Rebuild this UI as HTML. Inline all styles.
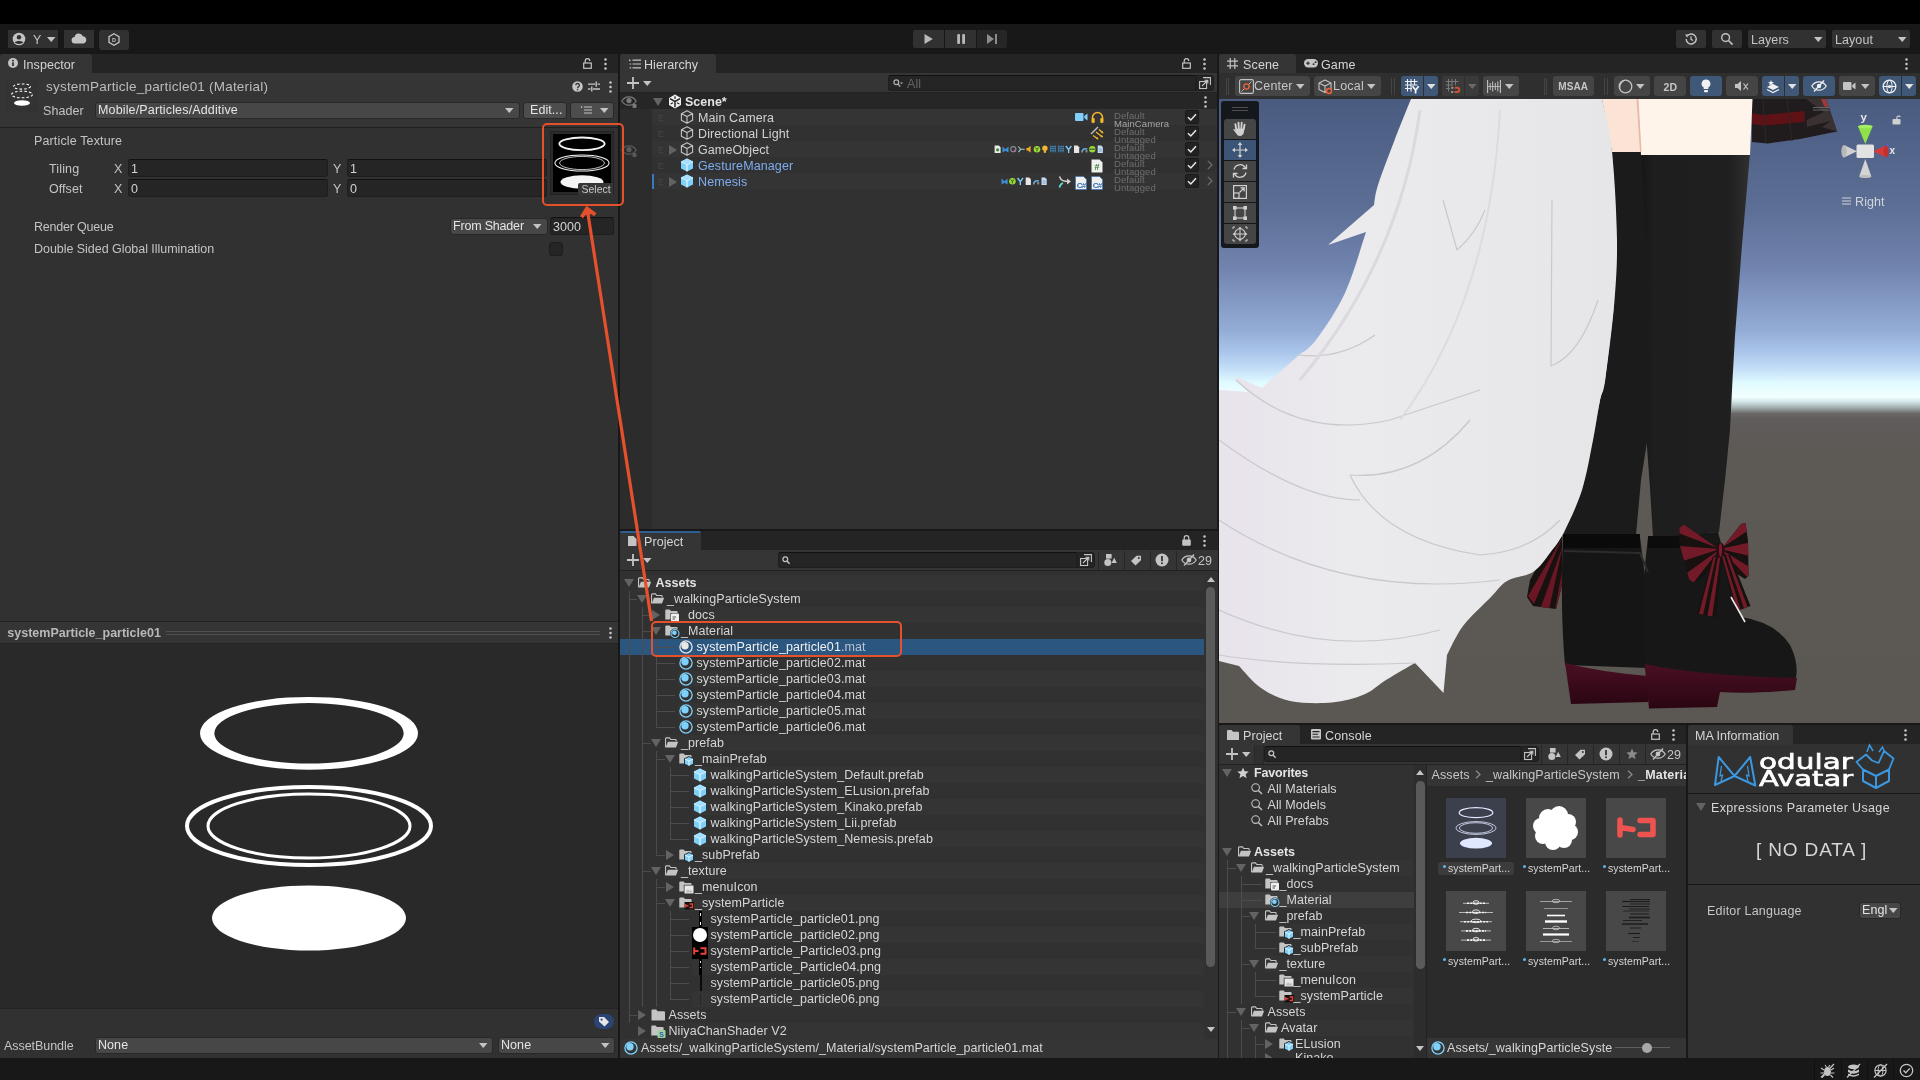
<!DOCTYPE html>
<html><head><meta charset="utf-8"><title>Unity</title>
<style>
html,body{margin:0;padding:0;background:#191919;}
body{width:1920px;height:1080px;position:relative;overflow:hidden;font-family:'Liberation Sans',sans-serif;font-size:12.5px;color:#d2d2d2;}
div,span.t,svg{position:absolute;box-sizing:border-box;}
span.t{white-space:pre;display:block;}
svg{overflow:visible;}
</style></head><body><div id="root" style="left:0;top:0;width:1920px;height:1080px;will-change:transform;"><!-- p_top --><div style="left:0px;top:0px;width:1920px;height:24px;background:#000;"></div><div style="left:0px;top:24px;width:1920px;height:1056px;background:#181818;"></div><div style="left:8px;top:30px;width:50px;height:18px;background:#313131;"></div><svg style="left:12px;top:32px;" width="14" height="14" viewBox="0 0 14 14"><circle cx="7" cy="7" r="6.3" fill="#c4c4c4"/><circle cx="7" cy="5.2" r="2.2" fill="#313131"/><path d="M2.8 10.6C3.8 8.6 10.2 8.6 11.2 10.6C10 12.3 4 12.3 2.8 10.6Z" fill="#313131"/></svg><span class="t" style="left:33px;top:31.5px;height:16px;line-height:16px;color:#c4c4c4;font-size:12.5px;letter-spacing:0.07px;">Y</span><svg style="left:46.75px;top:37.0px;" width="8.5" height="5" viewBox="0 0 8.5 5"><path d="M0 0H8.5L4.25 5Z" fill="#c4c4c4"/></svg><div style="left:64px;top:30px;width:30px;height:18px;background:#313131;"></div><svg style="left:71px;top:33px;" width="16" height="11" viewBox="0 0 16 11"><path d="M4 10.5a3.2 3.2 0 0 1 -.4 -6.4A4.3 4.3 0 0 1 11.8 3.2A3.7 3.7 0 0 1 12.4 10.5Z" fill="#c4c4c4"/></svg><div style="left:99px;top:30px;width:30px;height:19.5px;background:#313131;border-radius:3px;"></div><svg style="left:108px;top:33px;" width="12" height="13" viewBox="0 0 12 13"><path d="M6 .8L11 3.7V9.3L6 12.2L1 9.3V3.7Z" fill="none" stroke="#c4c4c4" stroke-width="1.3"/><text x="6" y="8.6" font-size="5.5" font-weight="700" text-anchor="middle" fill="#c4c4c4" font-family="Liberation Sans,sans-serif">D</text></svg><div style="left:913px;top:30px;width:31px;height:18px;background:#313131;border-radius:2px 0 0 2px;"></div><div style="left:945px;top:30px;width:31px;height:18px;background:#313131;"></div><div style="left:977px;top:30px;width:30px;height:18px;background:#262626;border-radius:0 2px 2px 0;"></div><svg style="left:923px;top:34px;" width="10" height="10" viewBox="0 0 10 10"><path d="M1.5 0V10L9.8 5Z" fill="#b8b8b8"/></svg><svg style="left:956px;top:34px;" width="10" height="10" viewBox="0 0 10 10"><rect x="1.2" y="0" width="2.8" height="10" rx="1" fill="#b8b8b8"/><rect x="6.2" y="0" width="2.8" height="10" rx="1" fill="#b8b8b8"/></svg><svg style="left:986px;top:34px;" width="12" height="10" viewBox="0 0 12 10"><path d="M1 0V10L8 5Z" fill="#8c8c8c"/><rect x="9" y="0" width="2" height="10" fill="#8c8c8c"/></svg><div style="left:1676px;top:30px;width:30px;height:18px;background:#313131;border-radius:2px;"></div><svg style="left:1684px;top:32px;" width="14" height="14" viewBox="0 0 14 14"><path d="M2.2 7a5 5 0 1 0 1.5 -3.6" fill="none" stroke="#c4c4c4" stroke-width="1.4"/><path d="M1.2 2.2L4.6 2.8L3 5.8Z" fill="#c4c4c4"/><path d="M7 4.2V7.3L9 8.6" fill="none" stroke="#c4c4c4" stroke-width="1.2"/></svg><div style="left:1712px;top:30px;width:30px;height:18px;background:#313131;border-radius:2px;"></div><svg style="left:1720px;top:32px;" width="14" height="14" viewBox="0 0 14 14"><circle cx="5.6" cy="5.6" r="3.9" fill="none" stroke="#c4c4c4" stroke-width="1.4"/><path d="M8.5 8.5L12.6 12.6" stroke="#c4c4c4" stroke-width="1.6"/></svg><div style="left:1748px;top:30px;width:78px;height:18px;background:#313131;border-radius:2px;"></div><span class="t" style="left:1751px;top:31.5px;height:16px;line-height:16px;color:#c4c4c4;font-size:12.5px;letter-spacing:0.07px;">Layers</span><svg style="left:1814.25px;top:37.0px;" width="8.5" height="5" viewBox="0 0 8.5 5"><path d="M0 0H8.5L4.25 5Z" fill="#c4c4c4"/></svg><div style="left:1832px;top:30px;width:78px;height:18px;background:#313131;border-radius:2px;"></div><span class="t" style="left:1835px;top:31.5px;height:16px;line-height:16px;color:#c4c4c4;font-size:12.5px;letter-spacing:0.07px;">Layout</span><svg style="left:1898.25px;top:37.0px;" width="8.5" height="5" viewBox="0 0 8.5 5"><path d="M0 0H8.5L4.25 5Z" fill="#c4c4c4"/></svg><!-- p_inspector --><div style="left:0px;top:54px;width:618px;height:1004px;background:#313131;"></div><div style="left:0px;top:54px;width:618px;height:19px;background:#242424;"></div><div style="left:0px;top:54px;width:92px;height:20px;background:#353535;border-radius:3px 3px 0 0;"></div><svg style="left:8px;top:58px;" width="10" height="10" viewBox="0 0 10 10"><circle cx="5" cy="5" r="5" fill="#c4c4c4"/><rect x="4.2" y="4.2" width="1.6" height="3.8" fill="#242424"/><circle cx="5" cy="2.6" r="0.95" fill="#242424"/></svg><span class="t" style="left:23px;top:56.5px;height:16px;line-height:16px;color:#d2d2d2;font-size:12.5px;letter-spacing:0.07px;">Inspector</span><svg style="left:583px;top:58px;" width="9" height="11" viewBox="0 0 9 11"><rect x="0.7" y="5" width="7.6" height="5.3" fill="none" stroke="#c4c4c4" stroke-width="1.2"/><path d="M2.2 5V3a2.3 2.3 0 0 1 4.6 0" fill="none" stroke="#c4c4c4" stroke-width="1.2"/></svg><svg style="left:603.5px;top:57.5px;" width="3" height="12" viewBox="0 0 3 12"><circle cx="1.5" cy="1.5" r="1.3" fill="#c4c4c4"/><circle cx="1.5" cy="6" r="1.3" fill="#c4c4c4"/><circle cx="1.5" cy="10.5" r="1.3" fill="#c4c4c4"/></svg><div style="left:0px;top:73px;width:618px;height:54px;background:#353535;"></div><div style="left:0px;top:127px;width:618px;height:1px;background:#1f1f1f;"></div><div style="left:6px;top:80px;width:32px;height:32px;background:#333333;"></div><svg style="left:6px;top:80px;" width="32" height="32" viewBox="0 0 32 32"><ellipse cx="16" cy="6.5" rx="8.5" ry="2.6" fill="none" stroke="#fff" stroke-width="1.05" stroke-dasharray="2.6 2"/><ellipse cx="16" cy="14.5" rx="10.5" ry="3.3" fill="none" stroke="#fff" stroke-width="1.05" stroke-dasharray="2.6 2"/><ellipse cx="16" cy="23" rx="8" ry="2.8" fill="#fff"/></svg><span class="t" style="left:46px;top:78.5px;height:16px;line-height:16px;color:#bcbcbc;font-size:13.5px;letter-spacing:0.21px;">systemParticle_particle01 (Material)</span><svg style="left:572px;top:81px;" width="11" height="11" viewBox="0 0 11 11"><circle cx="5.5" cy="5.5" r="5.3" fill="#c4c4c4"/><path d="M3.8 4.3a1.8 1.8 0 1 1 2.6 1.6c-.6.4-.8.7-.8 1.3" fill="none" stroke="#353535" stroke-width="1.3"/><circle cx="5.55" cy="8.7" r=".8" fill="#353535"/></svg><svg style="left:588px;top:81px;" width="12" height="11" viewBox="0 0 12 11"><path d="M0 3.2H7M9.5 3.2H12M0 8H2.5M5 8H12" stroke="#c4c4c4" stroke-width="1.3"/><path d="M8.2 0.6V5.8M3.8 5.4V10.6" stroke="#c4c4c4" stroke-width="1.4"/></svg><svg style="left:608.5px;top:80.5px;" width="3" height="12" viewBox="0 0 3 12"><circle cx="1.5" cy="1.5" r="1.3" fill="#c4c4c4"/><circle cx="1.5" cy="6" r="1.3" fill="#c4c4c4"/><circle cx="1.5" cy="10.5" r="1.3" fill="#c4c4c4"/></svg><span class="t" style="left:43px;top:102.5px;height:16px;line-height:16px;color:#c4c4c4;font-size:12.5px;letter-spacing:0.07px;">Shader</span><div style="left:94.5px;top:101.5px;width:425px;height:17px;background:#474747;border:1px solid #282828;border-radius:3px;"></div><span class="t" style="left:98px;top:101.5px;height:16px;line-height:16px;color:#e4e4e4;font-size:12.5px;letter-spacing:0.15px;">Mobile/Particles/Additive</span><svg style="left:505.25px;top:107.5px;" width="8.5" height="5" viewBox="0 0 8.5 5"><path d="M0 0H8.5L4.25 5Z" fill="#c4c4c4"/></svg><div style="left:523px;top:101.5px;width:43.5px;height:17px;background:#4d4d4d;border:1px solid #282828;border-radius:3px;"></div><span class="t" style="left:530px;top:101.5px;height:16px;line-height:16px;color:#e4e4e4;font-size:12.5px;letter-spacing:0.07px;">Edit...</span><div style="left:570px;top:101.5px;width:43.5px;height:17px;background:#4d4d4d;border:1px solid #282828;border-radius:3px;"></div><svg style="left:581px;top:106px;" width="11" height="8" viewBox="0 0 11 8"><path d="M3 1H11M3 4H11M3 7H11" stroke="#c4c4c4" stroke-width="1.1"/><path d="M0 0L2 1L0 2Z" fill="#c4c4c4"/></svg><svg style="left:599.75px;top:107.5px;" width="8.5" height="5" viewBox="0 0 8.5 5"><path d="M0 0H8.5L4.25 5Z" fill="#c4c4c4"/></svg><span class="t" style="left:34px;top:132.5px;height:16px;line-height:16px;color:#c4c4c4;font-size:12.5px;letter-spacing:0.14px;">Particle Texture</span><span class="t" style="left:49px;top:160.5px;height:16px;line-height:16px;color:#c4c4c4;font-size:12.5px;letter-spacing:0.15px;">Tiling</span><span class="t" style="left:49px;top:180.5px;height:16px;line-height:16px;color:#c4c4c4;font-size:12.5px;letter-spacing:0.06px;">Offset</span><span class="t" style="left:114px;top:160.5px;height:16px;line-height:16px;color:#c4c4c4;font-size:12.5px;letter-spacing:0.07px;">X</span><span class="t" style="left:114px;top:180.5px;height:16px;line-height:16px;color:#c4c4c4;font-size:12.5px;letter-spacing:0.07px;">X</span><span class="t" style="left:333px;top:160.5px;height:16px;line-height:16px;color:#c4c4c4;font-size:12.5px;letter-spacing:0.07px;">Y</span><span class="t" style="left:333px;top:180.5px;height:16px;line-height:16px;color:#c4c4c4;font-size:12.5px;letter-spacing:0.07px;">Y</span><div style="left:128px;top:159px;width:200px;height:18px;background:#252525;border:1px solid #1e1e1e;border-top-color:#111;border-radius:3px;"></div><span class="t" style="left:131px;top:160.5px;height:16px;line-height:16px;color:#d2d2d2;font-size:12.5px;letter-spacing:0.07px;">1</span><div style="left:128px;top:179px;width:200px;height:18px;background:#252525;border:1px solid #1e1e1e;border-top-color:#111;border-radius:3px;"></div><span class="t" style="left:131px;top:180.5px;height:16px;line-height:16px;color:#d2d2d2;font-size:12.5px;letter-spacing:0.07px;">0</span><div style="left:347px;top:159px;width:200px;height:18px;background:#252525;border:1px solid #1e1e1e;border-top-color:#111;border-radius:3px;"></div><span class="t" style="left:350px;top:160.5px;height:16px;line-height:16px;color:#d2d2d2;font-size:12.5px;letter-spacing:0.07px;">1</span><div style="left:347px;top:179px;width:200px;height:18px;background:#252525;border:1px solid #1e1e1e;border-top-color:#111;border-radius:3px;"></div><span class="t" style="left:350px;top:180.5px;height:16px;line-height:16px;color:#d2d2d2;font-size:12.5px;letter-spacing:0.07px;">0</span><div style="left:550px;top:131px;width:64px;height:64px;background:#2a2a2a;border:1px solid #232323;"></div><div style="left:553px;top:134px;width:58px;height:58px;background:#000;"></div><svg style="left:553px;top:134px;" width="58" height="58" viewBox="0 0 58 58"><ellipse cx="29" cy="9.842000000000002" rx="22.644000000000002" ry="6.2829999999999995" fill="none" stroke="#f4f4f4" stroke-width="1.8746"/><ellipse cx="29" cy="29" rx="27.084" ry="8.033999999999999" fill="none" stroke="#f4f4f4" stroke-width="1.0712"/><ellipse cx="29" cy="29" rx="22.422" ry="6.592" fill="none" stroke="#f4f4f4" stroke-width="0.8034"/><ellipse cx="29" cy="47.952" rx="21.534" ry="6.694999999999999" fill="#f4f4f4"/></svg><div style="left:578px;top:182.5px;width:35px;height:12px;background:#363636;border-radius:2px 0 0 0;"></div><span class="t" style="left:581.5px;top:182.5px;height:12px;line-height:12px;color:#c8c8c8;font-size:10.5px;">Select</span><span class="t" style="left:34px;top:218.5px;height:16px;line-height:16px;color:#c4c4c4;font-size:12.5px;letter-spacing:-0.2px;">Render Queue</span><div style="left:449.5px;top:217.5px;width:98px;height:17px;background:#474747;border:1px solid #282828;border-radius:3px;"></div><span class="t" style="left:453px;top:217.5px;height:16px;line-height:16px;color:#e4e4e4;font-size:12.5px;letter-spacing:-0.19px;">From Shader</span><svg style="left:533.25px;top:223.5px;" width="8.5" height="5" viewBox="0 0 8.5 5"><path d="M0 0H8.5L4.25 5Z" fill="#c4c4c4"/></svg><div style="left:550px;top:217px;width:64px;height:18px;background:#252525;border:1px solid #1e1e1e;border-top-color:#111;border-radius:3px;"></div><span class="t" style="left:553px;top:218.5px;height:16px;line-height:16px;color:#d2d2d2;font-size:12.5px;letter-spacing:0.07px;">3000</span><span class="t" style="left:34px;top:240.5px;height:16px;line-height:16px;color:#c4c4c4;font-size:12.5px;letter-spacing:-0.04px;">Double Sided Global Illumination</span><div style="left:549px;top:242px;width:14px;height:14px;background:#252525;border:1px solid #1e1e1e;border-radius:3px;"></div><div style="left:0px;top:621px;width:618px;height:1px;background:#232323;"></div><div style="left:0px;top:622px;width:618px;height:21px;background:#353535;"></div><div style="left:0px;top:643px;width:618px;height:1px;background:#232323;"></div><span class="t" style="left:7.3px;top:624.5px;height:16px;line-height:16px;color:#b8b8b8;font-size:12.5px;font-weight:700;">systemParticle_particle01</span><div style="left:166px;top:631px;width:434px;height:1px;background:#505050;"></div><div style="left:166px;top:634px;width:434px;height:1px;background:#505050;"></div><svg style="left:608.5px;top:626.5px;" width="3" height="12" viewBox="0 0 3 12"><circle cx="1.5" cy="1.5" r="1.3" fill="#c4c4c4"/><circle cx="1.5" cy="6" r="1.3" fill="#c4c4c4"/><circle cx="1.5" cy="10.5" r="1.3" fill="#c4c4c4"/></svg><div style="left:0px;top:644px;width:618px;height:364px;background:#292929;"></div><svg style="left:0px;top:644px;" width="618" height="364" viewBox="0 0 618 364"><path fill-rule="evenodd" fill="#fff" d="M200.0 89.3a109.0 36.4 0 1 0 218.0 0a109.0 36.4 0 1 0 -218.0 0ZM214.3 89.3a94.7 30.2 0 1 0 189.4 0a94.7 30.2 0 1 0 -189.4 0Z"/><ellipse cx="309" cy="182" rx="122.0" ry="39.0" fill="none" stroke="#fff" stroke-width="4.0"/><ellipse cx="309" cy="182" rx="101.0" ry="32.0" fill="none" stroke="#fff" stroke-width="3.0"/><ellipse cx="309" cy="274.0" rx="97.0" ry="32.5" fill="#fff"/></svg><div style="left:0px;top:1008px;width:618px;height:1px;background:#232323;"></div><div style="left:594px;top:1014px;width:20px;height:15px;background:#2a4473;border-radius:8px;"></div><svg style="left:598px;top:1016px;" width="12" height="11" viewBox="0 0 12 11"><path d="M1 1H6L11 6L6.5 10.5L1 5.5Z" fill="#e8e8e8"/><circle cx="3.6" cy="3.6" r="1.1" fill="#2a4473"/></svg><span class="t" style="left:4px;top:1037.5px;height:16px;line-height:16px;color:#c4c4c4;font-size:12.5px;letter-spacing:-0.06px;">AssetBundle</span><div style="left:95px;top:1036.7px;width:397.5px;height:17px;background:#474747;border:1px solid #282828;border-radius:3px;"></div><span class="t" style="left:98px;top:1036.5px;height:16px;line-height:16px;color:#e4e4e4;font-size:12.5px;letter-spacing:0.07px;">None</span><svg style="left:478.75px;top:1042.5px;" width="8.5" height="5" viewBox="0 0 8.5 5"><path d="M0 0H8.5L4.25 5Z" fill="#c4c4c4"/></svg><div style="left:498px;top:1036.7px;width:116.5px;height:17px;background:#474747;border:1px solid #282828;border-radius:3px;"></div><span class="t" style="left:501px;top:1036.5px;height:16px;line-height:16px;color:#e4e4e4;font-size:12.5px;letter-spacing:0.07px;">None</span><svg style="left:600.75px;top:1042.5px;" width="8.5" height="5" viewBox="0 0 8.5 5"><path d="M0 0H8.5L4.25 5Z" fill="#c4c4c4"/></svg><!-- p_hierarchy --><div style="left:620px;top:54px;width:597px;height:475px;background:#313131;"></div><div style="left:620px;top:54px;width:597px;height:19px;background:#242424;"></div><div style="left:620px;top:54px;width:96px;height:20px;background:#353535;border-radius:3px 3px 0 0;"></div><svg style="left:629px;top:59px;" width="12" height="10" viewBox="0 0 12 10"><path d="M3.5 1.2H12M3.5 5H12M3.5 8.8H12" stroke="#c4c4c4" stroke-width="1.2"/><path d="M0 .2L2.2 1.2L0 2.2Z" fill="#c4c4c4"/><path d="M.6 4.4H2.2V5.6H.6ZM.6 8.2H2.2V9.4H.6Z" fill="#c4c4c4"/></svg><span class="t" style="left:644px;top:56.5px;height:16px;line-height:16px;color:#d6d6d6;font-size:12.5px;letter-spacing:0.07px;">Hierarchy</span><svg style="left:1182px;top:58px;" width="9" height="11" viewBox="0 0 9 11"><rect x="0.7" y="5" width="7.6" height="5.3" fill="none" stroke="#c4c4c4" stroke-width="1.2"/><path d="M2.2 5V3a2.3 2.3 0 0 1 4.6 0" fill="none" stroke="#c4c4c4" stroke-width="1.2"/></svg><svg style="left:1202.5px;top:57.5px;" width="3" height="12" viewBox="0 0 3 12"><circle cx="1.5" cy="1.5" r="1.3" fill="#c4c4c4"/><circle cx="1.5" cy="6" r="1.3" fill="#c4c4c4"/><circle cx="1.5" cy="10.5" r="1.3" fill="#c4c4c4"/></svg><div style="left:620px;top:73px;width:597px;height:20px;background:#353535;"></div><div style="left:620px;top:92px;width:597px;height:1px;background:#222;"></div><svg style="left:627px;top:77px;" width="12" height="12" viewBox="0 0 12 12"><path d="M6 0V12M0 6H12" stroke="#c4c4c4" stroke-width="1.8"/></svg><svg style="left:642.75px;top:80.5px;" width="8.5" height="5" viewBox="0 0 8.5 5"><path d="M0 0H8.5L4.25 5Z" fill="#c4c4c4"/></svg><div style="left:888px;top:75px;width:308px;height:16px;background:#252525;border:1px solid #1e1e1e;border-top-color:#111;border-radius:3px 0 0 3px;"></div><svg style="left:893px;top:79px;" width="10" height="9" viewBox="0 0 10 9"><circle cx="3.3" cy="3.3" r="2.4" fill="none" stroke="#b0b0b0" stroke-width="1.2"/><path d="M5 5L7.2 7.6" stroke="#b0b0b0" stroke-width="1.3"/><path d="M7 3.5H10L8.5 5.2Z" fill="#b0b0b0"/></svg><span class="t" style="left:907px;top:75.5px;height:16px;line-height:16px;color:#636363;font-size:12.5px;letter-spacing:0.07px;">All</span><div style="left:1196px;top:75px;width:18px;height:16px;background:#252525;border:1px solid #1e1e1e;border-radius:0 3px 3px 0;"></div><svg style="left:1199px;top:77px;" width="12" height="12" viewBox="0 0 12 12"><rect x=".6" y="4.5" width="7" height="7" fill="none" stroke="#c4c4c4" stroke-width="1.1"/><path d="M4 .6H11.4V8" fill="none" stroke="#c4c4c4" stroke-width="1.1"/><path d="M3 9L8.5 3.5M5.5 3.2H8.8V6.5" fill="none" stroke="#c4c4c4" stroke-width="1.1"/></svg><div style="left:620px;top:93px;width:597px;height:16px;background:#262626;"></div><div style="left:620px;top:109px;width:32px;height:420px;background:#2c2c2c;"></div><svg style="left:621px;top:96px;" width="16" height="12" viewBox="0 0 16 12"><path d="M.8 5C3 1.5 6 .8 8 .8S13 1.5 15.2 5C13 8.5 10 9.2 8 9.2S3 8.5 .8 5Z" fill="none" stroke="#7a7a7a" stroke-width="1.2"/><circle cx="8" cy="4.6" r="2.6" fill="#7a7a7a"/><rect x="11.5" y="8" width="4" height="4" rx="1" fill="#7a7a7a"/></svg><svg style="left:621px;top:145px;" width="16" height="12" viewBox="0 0 16 12"><path d="M.8 5C3 1.5 6 .8 8 .8S13 1.5 15.2 5C13 8.5 10 9.2 8 9.2S3 8.5 .8 5Z" fill="none" stroke="#5a5a5a" stroke-width="1.2"/><circle cx="8" cy="4.6" r="2.6" fill="#5a5a5a"/><rect x="11.5" y="8" width="4" height="4" rx="1" fill="#5a5a5a"/></svg><svg style="left:653px;top:97.5px;" width="10" height="8" viewBox="0 0 10 8"><path d="M0 0H10L5 8Z" fill="#636363"/></svg><svg style="left:668px;top:94px;" width="14" height="15" viewBox="0 0 14 15"><path d="M7 .5L13 4V11L7 14.5L1 11V4Z" fill="#f0f0f0"/><path d="M7 7.5V13.2M7 7.5L2 4.7M7 7.5L12 4.7" stroke="#262626" stroke-width="1.5"/><path d="M7 2.2V5M2.6 10L5 8.7M11.4 10L9 8.7" stroke="#262626" stroke-width="1.2"/></svg><span class="t" style="left:685px;top:93.5px;height:16px;line-height:16px;color:#e4e4e4;font-size:12.5px;font-weight:700;">Scene*</span><svg style="left:1203.5px;top:95.5px;" width="3" height="12" viewBox="0 0 3 12"><circle cx="1.5" cy="1.5" r="1.3" fill="#c4c4c4"/><circle cx="1.5" cy="6" r="1.3" fill="#c4c4c4"/><circle cx="1.5" cy="10.5" r="1.3" fill="#c4c4c4"/></svg><div style="left:652px;top:109px;width:565px;height:16px;background:#343434;"></div><div style="left:652px;top:141px;width:565px;height:16px;background:#343434;"></div><div style="left:652px;top:173px;width:565px;height:16px;background:#343434;"></div><span class="t" style="left:658px;top:111.5px;height:12px;line-height:12px;color:#454545;font-size:9px;letter-spacing:0.07px;">E</span><svg style="left:680px;top:110px;" width="14" height="14" viewBox="0 0 14 14"><path d="M7 .8L12.6 3.7V10.3L7 13.2L1.4 10.3V3.7Z M1.4 3.7L7 6.6L12.6 3.7M7 6.6V13.2" fill="none" stroke="#c4c4c4" stroke-width="1.1" stroke-linejoin="round"/></svg><span class="t" style="left:698px;top:109.5px;height:16px;line-height:16px;color:#d2d2d2;font-size:12.5px;letter-spacing:0.1px;">Main Camera</span><span class="t" style="left:1114px;top:110.5px;height:9px;line-height:9px;color:#6e6e6e;font-size:9.5px;letter-spacing:0.07px;">Default</span><span class="t" style="left:1114px;top:118.5px;height:9px;line-height:9px;color:#a8a8a8;font-size:9.5px;letter-spacing:0.07px;">MainCamera</span><div style="left:1185px;top:110px;width:14px;height:14px;background:#222;border-radius:2px;border:1px solid #1b1b1b;"></div><svg style="left:1187px;top:113px;" width="10" height="8" viewBox="0 0 10 8"><path d="M1 4.2L3.8 7L9 1.2" fill="none" stroke="#e8e8e8" stroke-width="1.5"/></svg><span class="t" style="left:658px;top:127.5px;height:12px;line-height:12px;color:#454545;font-size:9px;letter-spacing:0.07px;">E</span><svg style="left:680px;top:126px;" width="14" height="14" viewBox="0 0 14 14"><path d="M7 .8L12.6 3.7V10.3L7 13.2L1.4 10.3V3.7Z M1.4 3.7L7 6.6L12.6 3.7M7 6.6V13.2" fill="none" stroke="#c4c4c4" stroke-width="1.1" stroke-linejoin="round"/></svg><span class="t" style="left:698px;top:125.5px;height:16px;line-height:16px;color:#d2d2d2;font-size:12.5px;letter-spacing:0.1px;">Directional Light</span><span class="t" style="left:1114px;top:126.5px;height:9px;line-height:9px;color:#6e6e6e;font-size:9.5px;letter-spacing:0.07px;">Default</span><span class="t" style="left:1114px;top:134.5px;height:9px;line-height:9px;color:#6e6e6e;font-size:9.5px;letter-spacing:0.07px;">Untagged</span><div style="left:1185px;top:126px;width:14px;height:14px;background:#222;border-radius:2px;border:1px solid #1b1b1b;"></div><svg style="left:1187px;top:129px;" width="10" height="8" viewBox="0 0 10 8"><path d="M1 4.2L3.8 7L9 1.2" fill="none" stroke="#e8e8e8" stroke-width="1.5"/></svg><span class="t" style="left:658px;top:143.5px;height:12px;line-height:12px;color:#454545;font-size:9px;letter-spacing:0.07px;">E</span><svg style="left:669px;top:144.5px;" width="8" height="10" viewBox="0 0 8 10"><path d="M0 0V10L8 5Z" fill="#636363"/></svg><svg style="left:680px;top:142px;" width="14" height="14" viewBox="0 0 14 14"><path d="M7 .8L12.6 3.7V10.3L7 13.2L1.4 10.3V3.7Z M1.4 3.7L7 6.6L12.6 3.7M7 6.6V13.2" fill="none" stroke="#c4c4c4" stroke-width="1.1" stroke-linejoin="round"/></svg><span class="t" style="left:698px;top:141.5px;height:16px;line-height:16px;color:#d2d2d2;font-size:12.5px;letter-spacing:0.1px;">GameObject</span><span class="t" style="left:1114px;top:142.5px;height:9px;line-height:9px;color:#6e6e6e;font-size:9.5px;letter-spacing:0.07px;">Default</span><span class="t" style="left:1114px;top:150.5px;height:9px;line-height:9px;color:#6e6e6e;font-size:9.5px;letter-spacing:0.07px;">Untagged</span><div style="left:1185px;top:142px;width:14px;height:14px;background:#222;border-radius:2px;border:1px solid #1b1b1b;"></div><svg style="left:1187px;top:145px;" width="10" height="8" viewBox="0 0 10 8"><path d="M1 4.2L3.8 7L9 1.2" fill="none" stroke="#e8e8e8" stroke-width="1.5"/></svg><span class="t" style="left:658px;top:159.5px;height:12px;line-height:12px;color:#454545;font-size:9px;letter-spacing:0.07px;">E</span><svg style="left:680px;top:158px;" width="14" height="14" viewBox="0 0 14 14"><path d="M7 .5L13 3.6V10.4L7 13.5L1 10.4V3.6Z" fill="#7fd0fb"/><path d="M1 3.6L7 6.7L13 3.6M7 6.7V13.5" fill="none" stroke="#fff" stroke-width="1"/><path d="M7 .5L13 3.6L7 6.7L1 3.6Z" fill="#a6e0ff"/></svg><span class="t" style="left:698px;top:157.5px;height:16px;line-height:16px;color:#7eadf0;font-size:12.5px;letter-spacing:0.1px;">GestureManager</span><span class="t" style="left:1114px;top:158.5px;height:9px;line-height:9px;color:#6e6e6e;font-size:9.5px;letter-spacing:0.07px;">Default</span><span class="t" style="left:1114px;top:166.5px;height:9px;line-height:9px;color:#6e6e6e;font-size:9.5px;letter-spacing:0.07px;">Untagged</span><div style="left:1185px;top:158px;width:14px;height:14px;background:#222;border-radius:2px;border:1px solid #1b1b1b;"></div><svg style="left:1187px;top:161px;" width="10" height="8" viewBox="0 0 10 8"><path d="M1 4.2L3.8 7L9 1.2" fill="none" stroke="#e8e8e8" stroke-width="1.5"/></svg><svg style="left:1207px;top:160px;" width="6" height="10" viewBox="0 0 6 10"><path d="M.8 .8L5 5L.8 9.2" fill="none" stroke="#707070" stroke-width="1.2"/></svg><span class="t" style="left:658px;top:175.5px;height:12px;line-height:12px;color:#454545;font-size:9px;letter-spacing:0.07px;">E</span><svg style="left:669px;top:176.5px;" width="8" height="10" viewBox="0 0 8 10"><path d="M0 0V10L8 5Z" fill="#636363"/></svg><svg style="left:680px;top:174px;" width="14" height="14" viewBox="0 0 14 14"><path d="M7 .5L13 3.6V10.4L7 13.5L1 10.4V3.6Z" fill="#7fd0fb"/><path d="M1 3.6L7 6.7L13 3.6M7 6.7V13.5" fill="none" stroke="#fff" stroke-width="1"/><path d="M7 .5L13 3.6L7 6.7L1 3.6Z" fill="#a6e0ff"/></svg><span class="t" style="left:698px;top:173.5px;height:16px;line-height:16px;color:#7eadf0;font-size:12.5px;letter-spacing:0.1px;">Nemesis</span><span class="t" style="left:1114px;top:174.5px;height:9px;line-height:9px;color:#6e6e6e;font-size:9.5px;letter-spacing:0.07px;">Default</span><span class="t" style="left:1114px;top:182.5px;height:9px;line-height:9px;color:#6e6e6e;font-size:9.5px;letter-spacing:0.07px;">Untagged</span><div style="left:1185px;top:174px;width:14px;height:14px;background:#222;border-radius:2px;border:1px solid #1b1b1b;"></div><svg style="left:1187px;top:177px;" width="10" height="8" viewBox="0 0 10 8"><path d="M1 4.2L3.8 7L9 1.2" fill="none" stroke="#e8e8e8" stroke-width="1.5"/></svg><svg style="left:1207px;top:176px;" width="6" height="10" viewBox="0 0 6 10"><path d="M.8 .8L5 5L.8 9.2" fill="none" stroke="#707070" stroke-width="1.2"/></svg><div style="left:652px;top:174px;width:2px;height:15px;background:#3b78c4;"></div><svg style="left:1075px;top:111px;" width="13" height="12" viewBox="0 0 13 12"><rect x="0" y="2" width="8.5" height="8" rx="1" fill="#7fd0fb"/><path d="M9.3 5L12.5 2.5V9.5L9.3 7Z" fill="#7fd0fb"/></svg><svg style="left:1091px;top:111px;" width="13" height="13" viewBox="0 0 13 13"><path d="M1.5 11V6.5a5 5 0 0 1 10 0V11" fill="none" stroke="#f5b52e" stroke-width="1.6"/><rect x=".7" y="7" width="3" height="5" rx="1" fill="#f5b52e"/><rect x="9.3" y="7" width="3" height="5" rx="1" fill="#f5b52e"/></svg><svg style="left:1090px;top:126px;" width="14" height="14" viewBox="0 0 14 14"><path d="M1 8L8 1" stroke="#c0c0c0" stroke-width="1.4"/><path d="M3 9.5L8 13M6 6L12.5 11M9 3.5L13 7" stroke="#f5b52e" stroke-width="1.3"/><path d="M8.5 13.5L5.8 12.8L7.4 11Z M13 11.5L10.2 10.8L11.8 9Z M13.5 7.5L10.8 6.6L12.5 5Z" fill="#f5b52e"/></svg><svg style="left:993.5px;top:145px;" width="112" height="9" viewBox="0 0 112 9"><path d="M0.6 .5H4.8L6.6 2.2V8H0.6Z" fill="#e6ece6"/><circle cx="3.6" cy="4.8" r="1.6" fill="#3d8a3d"/><path d="M8.5 7.5V1.5L11.4 4.2L14.5 1.5V7.5L11.4 5.8Z" fill="#3f8fd8"/><circle cx="19.3" cy="4.2" r="2.6" fill="none" stroke="#8a8a8a" stroke-width="1.1"/><circle cx="20.8" cy="5.6" r="1" fill="#c060c0"/><path d="M24.200000000000003 1.5L26.700000000000003 4.2L24.500000000000004 7.2M26.700000000000003 4.2H30.700000000000003" fill="none" stroke="#9cc" stroke-width="1.1"/><path d="M32.4 3H34.0L36.6 .8V7.8L34.0 5.6H32.4Z" fill="#f5a623"/><circle cx="43.0" cy="4.2" r="3.3" fill="#9bd938"/><path d="M41.3 2.4L43.0 4.3L44.7 2.4M43.0 4.3V6.4" stroke="#2a4a10" stroke-width=".9" fill="none"/><circle cx="50.900000000000006" cy="3.2" r="2.7" fill="#f5b52e"/><rect x="49.800000000000004" y="5.6" width="2.2" height="2.2" fill="#f5b52e"/><path d="M55.900000000000006 1.4H62.1M55.900000000000006 3.6H62.1M55.900000000000006 5.8H62.1M56.7 .6V7.4M59.00000000000001 .6V7.4M61.300000000000004 .6V7.4" stroke="#3f7fae" stroke-width=".9"/><path d="M63.800000000000004 1.4H70.0M63.800000000000004 3.6H70.0M63.800000000000004 5.8H70.0M64.60000000000001 .6V7.4M66.9 .6V7.4M69.2 .6V7.4" stroke="#3f7fae" stroke-width=".9"/><path d="M71.9 1L74.60000000000001 4.6L77.30000000000001 1M74.60000000000001 4.6V8" fill="none" stroke="#7fd0fb" stroke-width="1.4"/><path d="M80.0 .5H83.5L85.2 2.2V8H80.0Z" fill="#e6e6e6"/><path d="M87.9 7.5A3.6 3.6 0 0 1 93.30000000000001 4.2" fill="none" stroke="#6ab0e0" stroke-width="1.5"/><rect x="91.5" y="5" width="2" height="2.4" fill="#888"/><circle cx="98.30000000000001" cy="4.2" r="3.2" fill="#9bd938"/><path d="M95.4 4.2H101.20000000000002" stroke="#3a3a3a" stroke-width="1"/><path d="M103.7 .5H107.2L108.9 2.2V8H103.7Z" fill="#c8dcf0"/><path d="M104.9 4H107.7M104.9 6H107.7" stroke="#5a8cc8" stroke-width=".8"/></svg><svg style="left:1001px;top:177px;" width="48" height="9" viewBox="0 0 48 9"><path d="M0.6 7.5V1.5L3.5 4.2L6.6 1.5V7.5L3.5 5.8Z" fill="#3f8fd8"/><circle cx="11.4" cy="4.2" r="3.3" fill="#9bd938"/><path d="M9.700000000000001 2.4L11.4 4.3L13.100000000000001 2.4M11.4 4.3V6.4" stroke="#2a4a10" stroke-width=".9" fill="none"/><path d="M16.6 1L19.3 4.6L22.0 1M19.3 4.6V8" fill="none" stroke="#7fd0fb" stroke-width="1.4"/><path d="M24.700000000000003 .5H28.200000000000003L29.900000000000002 2.2V8H24.700000000000003Z" fill="#e6e6e6"/><path d="M32.6 7.5A3.6 3.6 0 0 1 38.0 4.2" fill="none" stroke="#6ab0e0" stroke-width="1.5"/><rect x="36.2" y="5" width="2" height="2.4" fill="#888"/><path d="M40.5 .5H44.0L45.7 2.2V8H40.5Z" fill="#c8dcf0"/><path d="M41.7 4H44.5M41.7 6H44.5" stroke="#5a8cc8" stroke-width=".8"/></svg><svg style="left:1091px;top:159px;" width="12" height="14" viewBox="0 0 12 14"><path d="M.5 .5H8.5L11.5 3.5V13.5H.5Z" fill="#f0f0f0"/><text x="6" y="11" font-size="9" font-weight="700" text-anchor="middle" fill="#2d7a2d" font-family="Liberation Sans,sans-serif">#</text></svg><svg style="left:1075px;top:176px;" width="12" height="14" viewBox="0 0 12 14"><path d="M.5 .5H8.5L11.5 3.5V13.5H.5Z" fill="#f0f0f0" stroke="#2a6db5" stroke-width=".6"/><text x="6" y="11.5" font-size="8" font-weight="700" text-anchor="middle" fill="#2a6db5" font-family="Liberation Sans,sans-serif" letter-spacing="-0.8">C#</text></svg><svg style="left:1091px;top:176px;" width="12" height="14" viewBox="0 0 12 14"><path d="M.5 .5H8.5L11.5 3.5V13.5H.5Z" fill="#f0f0f0" stroke="#2a6db5" stroke-width=".6"/><text x="6" y="11.5" font-size="8" font-weight="700" text-anchor="middle" fill="#2a6db5" font-family="Liberation Sans,sans-serif" letter-spacing="-0.8">C#</text></svg><svg style="left:1058px;top:175px;" width="14" height="14" viewBox="0 0 14 14"><path d="M1.5 1.5C3 6 6 6.5 11 6.5" fill="none" stroke="#d0d0d0" stroke-width="1.5"/><path d="M9 3.5L13 6.5L9 9.5Z" fill="#d0d0d0"/><path d="M1.5 12.5C2 9.5 3.5 8.5 5 8" fill="none" stroke="#5fe0d0" stroke-width="1.6"/></svg><!-- p_project --><div style="left:620px;top:531px;width:598px;height:527px;background:#313131;"></div><div style="left:620px;top:531px;width:598px;height:19px;background:#242424;"></div><div style="left:620px;top:531px;width:81px;height:20px;background:#353535;border-radius:3px 3px 0 0;"></div><div style="left:620px;top:531px;width:81px;height:1.5px;background:#2f5d92;border-radius:3px 3px 0 0;"></div><svg style="left:628px;top:536px;" width="11" height="10" viewBox="0 0 11 10"><path d="M0 10V0H5.5L8.5 3V10Z" fill="#c4c4c4"/></svg><span class="t" style="left:644px;top:533.5px;height:16px;line-height:16px;color:#d6d6d6;font-size:12.5px;letter-spacing:0.07px;">Project</span><svg style="left:1182px;top:535px;" width="9" height="11" viewBox="0 0 9 11"><rect x="0.2" y="4.5" width="8.6" height="6.3" rx="1" fill="#c4c4c4"/><path d="M2.2 5V3a2.3 2.3 0 0 1 4.6 0V5" fill="none" stroke="#c4c4c4" stroke-width="1.2"/></svg><svg style="left:1202.5px;top:534.5px;" width="3" height="12" viewBox="0 0 3 12"><circle cx="1.5" cy="1.5" r="1.3" fill="#c4c4c4"/><circle cx="1.5" cy="6" r="1.3" fill="#c4c4c4"/><circle cx="1.5" cy="10.5" r="1.3" fill="#c4c4c4"/></svg><div style="left:620px;top:550px;width:598px;height:20px;background:#353535;"></div><div style="left:620px;top:570px;width:598px;height:1px;background:#222;"></div><svg style="left:627px;top:554px;" width="12" height="12" viewBox="0 0 12 12"><path d="M6 0V12M0 6H12" stroke="#c4c4c4" stroke-width="1.8"/></svg><svg style="left:642.75px;top:557.5px;" width="8.5" height="5" viewBox="0 0 8.5 5"><path d="M0 0H8.5L4.25 5Z" fill="#c4c4c4"/></svg><div style="left:778px;top:552px;width:299px;height:16px;background:#252525;border:1px solid #1e1e1e;border-top-color:#111;border-radius:3px 0 0 3px;"></div><svg style="left:782px;top:556px;" width="9" height="9" viewBox="0 0 9 9"><circle cx="3.3" cy="3.3" r="2.4" fill="none" stroke="#c4c4c4" stroke-width="1.2"/><path d="M5 5L7.6 7.8" stroke="#c4c4c4" stroke-width="1.4"/></svg><div style="left:1077px;top:552px;width:18px;height:16px;background:#252525;border:1px solid #1e1e1e;border-radius:0 3px 3px 0;"></div><svg style="left:1080px;top:554px;" width="12" height="12" viewBox="0 0 12 12"><rect x=".6" y="4.5" width="7" height="7" fill="none" stroke="#c4c4c4" stroke-width="1.1"/><path d="M4 .6H11.4V8" fill="none" stroke="#c4c4c4" stroke-width="1.1"/><path d="M3 9L8.5 3.5M5.5 3.2H8.8V6.5" fill="none" stroke="#c4c4c4" stroke-width="1.1"/></svg><div style="left:1098px;top:551px;width:1px;height:19px;background:#262626;"></div><div style="left:1124px;top:551px;width:1px;height:19px;background:#262626;"></div><div style="left:1150px;top:551px;width:1px;height:19px;background:#262626;"></div><div style="left:1176px;top:551px;width:1px;height:19px;background:#262626;"></div><svg style="left:1104px;top:554px;" width="13" height="12" viewBox="0 0 13 12"><rect x="2" y="0" width="5.6" height="4.6" fill="#c4c4c4"/><circle cx="3.8" cy="8.6" r="3.5" fill="#c4c4c4"/><path d="M7.6 9L10.2 3.8L12.8 9Z" fill="#c4c4c4"/></svg><svg style="left:1130px;top:555px;" width="12" height="11" viewBox="0 0 12 11"><path d="M1 6L6.5 .8H11V5.2L5.5 10.5Z" fill="#c4c4c4"/><circle cx="8.8" cy="3" r="1" fill="#353535"/></svg><svg style="left:1155px;top:553px;" width="14" height="14" viewBox="0 0 14 14"><circle cx="7" cy="7" r="6.5" fill="#c4c4c4"/><rect x="6.1" y="3" width="1.8" height="5.2" fill="#353535"/><circle cx="7" cy="10.3" r="1" fill="#353535"/></svg><svg style="left:1181px;top:554px;" width="16" height="12" viewBox="0 0 16 12"><path d="M.8 6C3 2.5 6 1.8 8 1.8S13 2.5 15.2 6C13 9.5 10 10.2 8 10.2S3 9.5 .8 6Z" fill="none" stroke="#c4c4c4" stroke-width="1.2"/><circle cx="8" cy="6" r="2.4" fill="#c4c4c4"/><path d="M3 11.5L13 .5" stroke="#c4c4c4" stroke-width="1.3"/></svg><span class="t" style="left:1198px;top:552.5px;height:16px;line-height:16px;color:#c6c6c6;font-size:12.5px;letter-spacing:0.07px;">29</span><div style="left:637.0px;top:575px;width:567.0px;height:16px;background:#343434;"></div><svg style="left:623.5px;top:578.5px;" width="10" height="8" viewBox="0 0 10 8"><path d="M0 0H10L5 8Z" fill="#636363"/></svg><svg style="left:638.0px;top:577px;height:11.5px;" width="13.5" height="12" viewBox="0 0 15 12"><path d="M.6 11V1.6Q.6 .6 1.6 .6H5L6.4 2.4H11.4Q12.4 2.4 12.4 3.4V4.6" fill="none" stroke="#c4c4c4" stroke-width="1.2"/><path d="M.8 11.4L3.2 5H14.6L12.2 11.4Z" fill="#c4c4c4"/></svg><span class="t" style="left:655.5px;top:574.5px;height:16px;line-height:16px;color:#e4e4e4;font-size:12.5px;font-weight:700;">Assets</span><div style="left:628.5px;top:598.5px;width:8.0px;height:1px;background:#4c4c4c;"></div><svg style="left:636.5px;top:594.5px;" width="10" height="8" viewBox="0 0 10 8"><path d="M0 0H10L5 8Z" fill="#636363"/></svg><svg style="left:651.0px;top:593px;height:11.5px;" width="13.5" height="12" viewBox="0 0 15 12"><path d="M.6 11V1.6Q.6 .6 1.6 .6H5L6.4 2.4H11.4Q12.4 2.4 12.4 3.4V4.6" fill="none" stroke="#c4c4c4" stroke-width="1.2"/><path d="M.8 11.4L3.2 5H14.6L12.2 11.4Z" fill="#c4c4c4"/></svg><span class="t" style="left:667.0px;top:590.5px;height:16px;line-height:16px;color:#d6d6d6;font-size:12.5px;letter-spacing:0.08px;">_walkingParticleSystem</span><div style="left:664.0px;top:607px;width:540.0px;height:16px;background:#343434;"></div><div style="left:641.5px;top:614.5px;width:9.0px;height:1px;background:#4c4c4c;"></div><svg style="left:652.0px;top:609.5px;" width="8" height="10" viewBox="0 0 8 10"><path d="M0 0V10L8 5Z" fill="#636363"/></svg><svg style="left:665.0px;top:609px;" width="15" height="12" viewBox="0 0 15 12"><path d="M.3 10.6V1.4Q.3 .4 1.3 .4H4.6L5.9 2H11.6Q12.6 2 12.6 3V10.6Z" fill="#c4c4c4"/><rect x="5.5" y="4" width="9" height="9" fill="#313131"/><rect x="6" y="4.5" width="8" height="8" rx="1" fill="#f0f0f0"/><path d="M7.5 8H11M7.5 10H10" stroke="#555" stroke-width="1"/></svg><span class="t" style="left:681.0px;top:606.5px;height:16px;line-height:16px;color:#d6d6d6;font-size:12.5px;letter-spacing:0.08px;">_docs</span><div style="left:641.5px;top:630.5px;width:9.0px;height:1px;background:#4c4c4c;"></div><svg style="left:650.5px;top:626.5px;" width="10" height="8" viewBox="0 0 10 8"><path d="M0 0H10L5 8Z" fill="#636363"/></svg><svg style="left:665.0px;top:625px;" width="15" height="12" viewBox="0 0 15 12"><path d="M.3 10.6V1.4Q.3 .4 1.3 .4H4.6L5.9 2H11.6Q12.6 2 12.6 3V10.6Z" fill="#c4c4c4"/><circle cx="10" cy="8.5" r="5" fill="#313131"/><circle cx="10" cy="8.5" r="4" fill="#313131" stroke="#7fd0fb" stroke-width="1.1"/><circle cx="9.4" cy="7.8" r="2.3" fill="#7fd0fb"/></svg><span class="t" style="left:681.0px;top:622.5px;height:16px;line-height:16px;color:#d6d6d6;font-size:12.5px;letter-spacing:0.08px;">_Material</span><div style="left:620px;top:639px;width:584px;height:16px;background:#2b5680;"></div><div style="left:655.5px;top:646.5px;width:19.5px;height:1px;background:#4c4c4c;"></div><svg style="left:678.5px;top:640px;" width="14" height="14" viewBox="0 0 14 14"><circle cx="7" cy="7" r="6.1" fill="none" stroke="#e8e8e8" stroke-width="1.3"/><circle cx="6" cy="5.8" r="3.7" fill="#e8e8e8"/></svg><span class="t" style="left:696.5px;top:638.5px;height:16px;line-height:16px;color:#f0f0f0;font-size:12.5px;letter-spacing:0.08px;">systemParticle_particle01<span style="color:#b8c4d4">.mat</span></span><div style="left:655.5px;top:662.5px;width:19.5px;height:1px;background:#4c4c4c;"></div><svg style="left:678.5px;top:656px;" width="14" height="14" viewBox="0 0 14 14"><circle cx="7" cy="7" r="6.1" fill="none" stroke="#7fd0fb" stroke-width="1.3"/><circle cx="6" cy="5.8" r="3.7" fill="#7fd0fb"/></svg><span class="t" style="left:696.5px;top:654.5px;height:16px;line-height:16px;color:#d6d6d6;font-size:12.5px;letter-spacing:0.08px;">systemParticle_particle02.mat</span><div style="left:678.0px;top:671px;width:526.0px;height:16px;background:#343434;"></div><div style="left:655.5px;top:678.5px;width:19.5px;height:1px;background:#4c4c4c;"></div><svg style="left:678.5px;top:672px;" width="14" height="14" viewBox="0 0 14 14"><circle cx="7" cy="7" r="6.1" fill="none" stroke="#7fd0fb" stroke-width="1.3"/><circle cx="6" cy="5.8" r="3.7" fill="#7fd0fb"/></svg><span class="t" style="left:696.5px;top:670.5px;height:16px;line-height:16px;color:#d6d6d6;font-size:12.5px;letter-spacing:0.08px;">systemParticle_particle03.mat</span><div style="left:655.5px;top:694.5px;width:19.5px;height:1px;background:#4c4c4c;"></div><svg style="left:678.5px;top:688px;" width="14" height="14" viewBox="0 0 14 14"><circle cx="7" cy="7" r="6.1" fill="none" stroke="#7fd0fb" stroke-width="1.3"/><circle cx="6" cy="5.8" r="3.7" fill="#7fd0fb"/></svg><span class="t" style="left:696.5px;top:686.5px;height:16px;line-height:16px;color:#d6d6d6;font-size:12.5px;letter-spacing:0.08px;">systemParticle_particle04.mat</span><div style="left:678.0px;top:703px;width:526.0px;height:16px;background:#343434;"></div><div style="left:655.5px;top:710.5px;width:19.5px;height:1px;background:#4c4c4c;"></div><svg style="left:678.5px;top:704px;" width="14" height="14" viewBox="0 0 14 14"><circle cx="7" cy="7" r="6.1" fill="none" stroke="#7fd0fb" stroke-width="1.3"/><circle cx="6" cy="5.8" r="3.7" fill="#7fd0fb"/></svg><span class="t" style="left:696.5px;top:702.5px;height:16px;line-height:16px;color:#d6d6d6;font-size:12.5px;letter-spacing:0.08px;">systemParticle_particle05.mat</span><div style="left:655.5px;top:726.5px;width:19.5px;height:1px;background:#4c4c4c;"></div><svg style="left:678.5px;top:720px;" width="14" height="14" viewBox="0 0 14 14"><circle cx="7" cy="7" r="6.1" fill="none" stroke="#7fd0fb" stroke-width="1.3"/><circle cx="6" cy="5.8" r="3.7" fill="#7fd0fb"/></svg><span class="t" style="left:696.5px;top:718.5px;height:16px;line-height:16px;color:#d6d6d6;font-size:12.5px;letter-spacing:0.08px;">systemParticle_particle06.mat</span><div style="left:664.0px;top:735px;width:540.0px;height:16px;background:#343434;"></div><div style="left:641.5px;top:742.5px;width:9.0px;height:1px;background:#4c4c4c;"></div><svg style="left:650.5px;top:738.5px;" width="10" height="8" viewBox="0 0 10 8"><path d="M0 0H10L5 8Z" fill="#636363"/></svg><svg style="left:665.0px;top:737px;height:11.5px;" width="13.5" height="12" viewBox="0 0 15 12"><path d="M.6 11V1.6Q.6 .6 1.6 .6H5L6.4 2.4H11.4Q12.4 2.4 12.4 3.4V4.6" fill="none" stroke="#c4c4c4" stroke-width="1.2"/><path d="M.8 11.4L3.2 5H14.6L12.2 11.4Z" fill="#c4c4c4"/></svg><span class="t" style="left:681.0px;top:734.5px;height:16px;line-height:16px;color:#d6d6d6;font-size:12.5px;letter-spacing:0.08px;">_prefab</span><div style="left:655.5px;top:758.5px;width:9.0px;height:1px;background:#4c4c4c;"></div><svg style="left:664.5px;top:754.5px;" width="10" height="8" viewBox="0 0 10 8"><path d="M0 0H10L5 8Z" fill="#636363"/></svg><svg style="left:679.0px;top:753px;" width="15" height="12" viewBox="0 0 15 12"><path d="M.3 10.6V1.4Q.3 .4 1.3 .4H4.6L5.9 2H11.6Q12.6 2 12.6 3V10.6Z" fill="#c4c4c4"/><path d="M10 3L15 5.5V11.3L10 13.8L5 11.3V5.5Z" fill="#313131"/><path d="M10 4L14 6V10.8L10 12.8L6 10.8V6Z" fill="#7fd0fb"/><path d="M6 6L10 8L14 6M10 8V12.8" stroke="#fff" stroke-width=".8" fill="none"/></svg><span class="t" style="left:695.0px;top:750.5px;height:16px;line-height:16px;color:#d6d6d6;font-size:12.5px;letter-spacing:0.08px;">_mainPrefab</span><div style="left:692.0px;top:767px;width:512.0px;height:16px;background:#343434;"></div><div style="left:669.5px;top:774.5px;width:19.5px;height:1px;background:#4c4c4c;"></div><svg style="left:693.0px;top:768px;" width="14" height="14" viewBox="0 0 14 14"><path d="M7 .5L13 3.6V10.4L7 13.5L1 10.4V3.6Z" fill="#7fd0fb"/><path d="M1 3.6L7 6.7L13 3.6M7 6.7V13.5" fill="none" stroke="#fff" stroke-width="1"/><path d="M7 .5L13 3.6L7 6.7L1 3.6Z" fill="#a6e0ff"/></svg><span class="t" style="left:710.5px;top:766.5px;height:16px;line-height:16px;color:#d6d6d6;font-size:12.5px;letter-spacing:0.08px;">walkingParticleSystem_Default.prefab</span><div style="left:669.5px;top:790.5px;width:19.5px;height:1px;background:#4c4c4c;"></div><svg style="left:693.0px;top:784px;" width="14" height="14" viewBox="0 0 14 14"><path d="M7 .5L13 3.6V10.4L7 13.5L1 10.4V3.6Z" fill="#7fd0fb"/><path d="M1 3.6L7 6.7L13 3.6M7 6.7V13.5" fill="none" stroke="#fff" stroke-width="1"/><path d="M7 .5L13 3.6L7 6.7L1 3.6Z" fill="#a6e0ff"/></svg><span class="t" style="left:710.5px;top:782.5px;height:16px;line-height:16px;color:#d6d6d6;font-size:12.5px;letter-spacing:0.08px;">walkingParticleSystem_ELusion.prefab</span><div style="left:692.0px;top:799px;width:512.0px;height:16px;background:#343434;"></div><div style="left:669.5px;top:806.5px;width:19.5px;height:1px;background:#4c4c4c;"></div><svg style="left:693.0px;top:800px;" width="14" height="14" viewBox="0 0 14 14"><path d="M7 .5L13 3.6V10.4L7 13.5L1 10.4V3.6Z" fill="#7fd0fb"/><path d="M1 3.6L7 6.7L13 3.6M7 6.7V13.5" fill="none" stroke="#fff" stroke-width="1"/><path d="M7 .5L13 3.6L7 6.7L1 3.6Z" fill="#a6e0ff"/></svg><span class="t" style="left:710.5px;top:798.5px;height:16px;line-height:16px;color:#d6d6d6;font-size:12.5px;letter-spacing:0.08px;">walkingParticleSystem_Kinako.prefab</span><div style="left:669.5px;top:822.5px;width:19.5px;height:1px;background:#4c4c4c;"></div><svg style="left:693.0px;top:816px;" width="14" height="14" viewBox="0 0 14 14"><path d="M7 .5L13 3.6V10.4L7 13.5L1 10.4V3.6Z" fill="#7fd0fb"/><path d="M1 3.6L7 6.7L13 3.6M7 6.7V13.5" fill="none" stroke="#fff" stroke-width="1"/><path d="M7 .5L13 3.6L7 6.7L1 3.6Z" fill="#a6e0ff"/></svg><span class="t" style="left:710.5px;top:814.5px;height:16px;line-height:16px;color:#d6d6d6;font-size:12.5px;letter-spacing:0.08px;">walkingParticleSystem_Lii.prefab</span><div style="left:692.0px;top:831px;width:512.0px;height:16px;background:#343434;"></div><div style="left:669.5px;top:838.5px;width:19.5px;height:1px;background:#4c4c4c;"></div><svg style="left:693.0px;top:832px;" width="14" height="14" viewBox="0 0 14 14"><path d="M7 .5L13 3.6V10.4L7 13.5L1 10.4V3.6Z" fill="#7fd0fb"/><path d="M1 3.6L7 6.7L13 3.6M7 6.7V13.5" fill="none" stroke="#fff" stroke-width="1"/><path d="M7 .5L13 3.6L7 6.7L1 3.6Z" fill="#a6e0ff"/></svg><span class="t" style="left:710.5px;top:830.5px;height:16px;line-height:16px;color:#d6d6d6;font-size:12.5px;letter-spacing:0.08px;">walkingParticleSystem_Nemesis.prefab</span><div style="left:655.5px;top:854.5px;width:9.0px;height:1px;background:#4c4c4c;"></div><svg style="left:666.0px;top:849.5px;" width="8" height="10" viewBox="0 0 8 10"><path d="M0 0V10L8 5Z" fill="#636363"/></svg><svg style="left:679.0px;top:849px;" width="15" height="12" viewBox="0 0 15 12"><path d="M.3 10.6V1.4Q.3 .4 1.3 .4H4.6L5.9 2H11.6Q12.6 2 12.6 3V10.6Z" fill="#c4c4c4"/><path d="M10 3L15 5.5V11.3L10 13.8L5 11.3V5.5Z" fill="#313131"/><path d="M10 4L14 6V10.8L10 12.8L6 10.8V6Z" fill="#7fd0fb"/><path d="M6 6L10 8L14 6M10 8V12.8" stroke="#fff" stroke-width=".8" fill="none"/></svg><span class="t" style="left:695.0px;top:846.5px;height:16px;line-height:16px;color:#d6d6d6;font-size:12.5px;letter-spacing:0.08px;">_subPrefab</span><div style="left:664.0px;top:863px;width:540.0px;height:16px;background:#343434;"></div><div style="left:641.5px;top:870.5px;width:9.0px;height:1px;background:#4c4c4c;"></div><svg style="left:650.5px;top:866.5px;" width="10" height="8" viewBox="0 0 10 8"><path d="M0 0H10L5 8Z" fill="#636363"/></svg><svg style="left:665.0px;top:865px;height:11.5px;" width="13.5" height="12" viewBox="0 0 15 12"><path d="M.6 11V1.6Q.6 .6 1.6 .6H5L6.4 2.4H11.4Q12.4 2.4 12.4 3.4V4.6" fill="none" stroke="#c4c4c4" stroke-width="1.2"/><path d="M.8 11.4L3.2 5H14.6L12.2 11.4Z" fill="#c4c4c4"/></svg><span class="t" style="left:681.0px;top:862.5px;height:16px;line-height:16px;color:#d6d6d6;font-size:12.5px;letter-spacing:0.08px;">_texture</span><div style="left:655.5px;top:886.5px;width:9.0px;height:1px;background:#4c4c4c;"></div><svg style="left:666.0px;top:881.5px;" width="8" height="10" viewBox="0 0 8 10"><path d="M0 0V10L8 5Z" fill="#636363"/></svg><svg style="left:679.0px;top:881px;" width="15" height="12" viewBox="0 0 15 12"><path d="M.3 10.6V1.4Q.3 .4 1.3 .4H4.6L5.9 2H11.6Q12.6 2 12.6 3V10.6Z" fill="#c4c4c4"/><rect x="4.8" y="3.8" width="10.4" height="9.4" fill="#313131"/><rect x="5.5" y="4.5" width="9" height="8" fill="#e8e8e8"/><path d="M6.5 11.5L9 8L10.5 10L12 8.8L13.5 11.5Z" fill="#bbb"/></svg><span class="t" style="left:695.0px;top:878.5px;height:16px;line-height:16px;color:#d6d6d6;font-size:12.5px;letter-spacing:0.08px;">_menuIcon</span><div style="left:678.0px;top:895px;width:526.0px;height:16px;background:#343434;"></div><div style="left:655.5px;top:902.5px;width:9.0px;height:1px;background:#4c4c4c;"></div><svg style="left:664.5px;top:898.5px;" width="10" height="8" viewBox="0 0 10 8"><path d="M0 0H10L5 8Z" fill="#636363"/></svg><svg style="left:679.0px;top:897px;" width="15" height="12" viewBox="0 0 15 12"><path d="M.3 10.6V1.4Q.3 .4 1.3 .4H4.6L5.9 2H11.6Q12.6 2 12.6 3V10.6Z" fill="#c4c4c4"/><rect x="5.5" y="5" width="9.5" height="7.5" fill="#111"/><path d="M6.5 7V10.5M6.5 8.8H9.5M10.5 7H13.5V10.5H10.5" stroke="#e8413a" stroke-width="1.4" fill="none"/></svg><span class="t" style="left:695.0px;top:894.5px;height:16px;line-height:16px;color:#d6d6d6;font-size:12.5px;letter-spacing:0.08px;">_systemParticle</span><div style="left:669.5px;top:918.5px;width:19.5px;height:1px;background:#4c4c4c;"></div><div style="left:699.0px;top:911px;width:3px;height:16px;background:#000;"></div><div style="left:700.0px;top:913px;width:1px;height:3px;background:#ddd;"></div><div style="left:700.0px;top:922px;width:1px;height:3px;background:#fff;"></div><span class="t" style="left:710.5px;top:910.5px;height:16px;line-height:16px;color:#d6d6d6;font-size:12.5px;letter-spacing:0.08px;">systemParticle_particle01.png</span><div style="left:692.0px;top:927px;width:512.0px;height:16px;background:#343434;"></div><div style="left:669.5px;top:934.5px;width:19.5px;height:1px;background:#4c4c4c;"></div><div style="left:692.0px;top:927px;width:16px;height:16px;background:#000;"></div><div style="left:693.0px;top:928px;width:14px;height:14px;background:#fff;border-radius:7px;"></div><span class="t" style="left:710.5px;top:926.5px;height:16px;line-height:16px;color:#d6d6d6;font-size:12.5px;letter-spacing:0.08px;">systemParticle_particle02.png</span><div style="left:669.5px;top:950.5px;width:19.5px;height:1px;background:#4c4c4c;"></div><div style="left:692.0px;top:943px;width:16px;height:16px;background:#000;"></div><svg style="left:693.0px;top:947px;" width="14" height="8" viewBox="0 0 14 8"><path d="M1.2 .5V7.5M1.2 4H5.5M7.5 1.2H12.5V6.8H7.5" stroke="#e8413a" stroke-width="2" fill="none"/></svg><span class="t" style="left:710.5px;top:942.5px;height:16px;line-height:16px;color:#d6d6d6;font-size:12.5px;letter-spacing:0.08px;">systemParticle_Particle03.png</span><div style="left:692.0px;top:959px;width:512.0px;height:16px;background:#343434;"></div><div style="left:669.5px;top:966.5px;width:19.5px;height:1px;background:#4c4c4c;"></div><div style="left:699.0px;top:959px;width:3px;height:16px;background:#000;"></div><div style="left:700.0px;top:961px;width:1px;height:2px;background:#ddd;"></div><div style="left:700.0px;top:967px;width:1px;height:1px;background:#ddd;"></div><span class="t" style="left:710.5px;top:958.5px;height:16px;line-height:16px;color:#d6d6d6;font-size:12.5px;letter-spacing:0.08px;">systemParticle_Particle04.png</span><div style="left:669.5px;top:982.5px;width:19.5px;height:1px;background:#4c4c4c;"></div><div style="left:699.5px;top:975px;width:2px;height:16px;background:#0a0a0a;"></div><span class="t" style="left:710.5px;top:974.5px;height:16px;line-height:16px;color:#d6d6d6;font-size:12.5px;letter-spacing:0.08px;">systemParticle_particle05.png</span><div style="left:692.0px;top:991px;width:512.0px;height:16px;background:#343434;"></div><div style="left:669.5px;top:998.5px;width:19.5px;height:1px;background:#4c4c4c;"></div><div style="left:700.0px;top:994px;width:1px;height:11px;background:#262626;"></div><span class="t" style="left:710.5px;top:990.5px;height:16px;line-height:16px;color:#d6d6d6;font-size:12.5px;letter-spacing:0.08px;">systemParticle_particle06.png</span><div style="left:628.5px;top:1014.5px;width:8.0px;height:1px;background:#4c4c4c;"></div><svg style="left:638.0px;top:1009.5px;" width="8" height="10" viewBox="0 0 8 10"><path d="M0 0V10L8 5Z" fill="#636363"/></svg><svg style="left:651.0px;top:1009px;" width="15" height="12" viewBox="0 0 15 12"><path d="M.5 11.5V1.5Q.5 .5 1.5 .5H5.2L6.6 2.3H13Q14 2.3 14 3.3V11.5Z" fill="#c4c4c4"/></svg><span class="t" style="left:668.5px;top:1006.5px;height:16px;line-height:16px;color:#d6d6d6;font-size:12.5px;letter-spacing:0.08px;">Assets</span><div style="left:650.0px;top:1023px;width:554.0px;height:16px;background:#343434;"></div><svg style="left:638.0px;top:1025.5px;" width="8" height="10" viewBox="0 0 8 10"><path d="M0 0V10L8 5Z" fill="#636363"/></svg><svg style="left:651.0px;top:1025px;" width="15" height="12" viewBox="0 0 15 12"><path d="M.3 10.6V1.4Q.3 .4 1.3 .4H4.6L5.9 2H11.6Q12.6 2 12.6 3V10.6Z" fill="#c4c4c4"/><rect x="6.5" y="5" width="8" height="8" rx="1" fill="#9fd0a0"/><text x="10.5" y="11.8" font-size="7" font-weight="700" text-anchor="middle" fill="#2a5db0" font-family="Liberation Sans,sans-serif">S</text></svg><span class="t" style="left:668.5px;top:1022.5px;height:16px;line-height:16px;color:#d6d6d6;font-size:12.5px;letter-spacing:0.08px;">NiiyaChanShader V2</span><div style="left:628.5px;top:591px;width:1px;height:432px;background:#4c4c4c;"></div><div style="left:641.5px;top:607px;width:1px;height:400px;background:#4c4c4c;"></div><div style="left:655.5px;top:639px;width:1px;height:88px;background:#4c4c4c;"></div><div style="left:655.5px;top:751px;width:1px;height:104px;background:#4c4c4c;"></div><div style="left:669.5px;top:767px;width:1px;height:72px;background:#4c4c4c;"></div><div style="left:655.5px;top:879px;width:1px;height:128px;background:#4c4c4c;"></div><div style="left:669.5px;top:911px;width:1px;height:88px;background:#4c4c4c;"></div><div style="left:1204px;top:571px;width:14px;height:468px;background:#313131;"></div><svg style="left:1207px;top:577px;" width="8" height="5" viewBox="0 0 8 5"><path d="M0 5H8L4 0Z" fill="#c4c4c4"/></svg><svg style="left:1207px;top:1027px;" width="8" height="5" viewBox="0 0 8 5"><path d="M0 0H8L4 5Z" fill="#c4c4c4"/></svg><div style="left:1206px;top:587px;width:9px;height:380px;background:#5a5a5a;border-radius:4.5px;"></div><div style="left:620px;top:1039px;width:598px;height:19px;background:#353535;"></div><svg style="left:624px;top:1041px;" width="14" height="14" viewBox="0 0 14 14"><circle cx="7" cy="7" r="6.1" fill="none" stroke="#7fd0fb" stroke-width="1.3"/><circle cx="6" cy="5.8" r="3.7" fill="#7fd0fb"/></svg><span class="t" style="left:641px;top:1039.5px;height:16px;line-height:16px;color:#d6d6d6;font-size:12.5px;letter-spacing:0.054px;">Assets/_walkingParticleSystem/_Material/systemParticle_particle01.mat</span><!-- p_scene --><div style="left:1219px;top:54px;width:701px;height:19px;background:#242424;"></div><div style="left:1219px;top:54px;width:77px;height:20px;background:#353535;border-radius:3px 3px 0 0;"></div><svg style="left:1227px;top:58px;" width="11" height="11" viewBox="0 0 11 11"><path d="M3.2 0V11M7.8 0V11M0 3.2H11M0 7.8H11" stroke="#c4c4c4" stroke-width="1.2"/></svg><span class="t" style="left:1243px;top:56.5px;height:16px;line-height:16px;color:#d6d6d6;font-size:12.5px;letter-spacing:0.15px;">Scene</span><svg style="left:1304px;top:59px;" width="14" height="9" viewBox="0 0 14 9"><rect x="0" y="0" width="14" height="8.5" rx="4.2" fill="#c4c4c4"/><path d="M2.2 4.2H5.8M4 2.4V6" stroke="#242424" stroke-width="1.1"/><circle cx="9.6" cy="5.2" r=".9" fill="#242424"/><circle cx="11.6" cy="3.2" r=".9" fill="#242424"/></svg><span class="t" style="left:1321px;top:56.5px;height:16px;line-height:16px;color:#d6d6d6;font-size:12.5px;letter-spacing:0.15px;">Game</span><svg style="left:1904.5px;top:57.5px;" width="3" height="12" viewBox="0 0 3 12"><circle cx="1.5" cy="1.5" r="1.3" fill="#c4c4c4"/><circle cx="1.5" cy="6" r="1.3" fill="#c4c4c4"/><circle cx="1.5" cy="10.5" r="1.3" fill="#c4c4c4"/></svg><div style="left:1219px;top:73px;width:701px;height:26px;background:#2f2f2f;"></div><div style="left:1225.5px;top:78px;width:1px;height:17px;background:#444;"></div><div style="left:1228.0px;top:78px;width:1px;height:17px;background:#444;"></div><div style="left:1391px;top:78px;width:1px;height:17px;background:#444;"></div><div style="left:1393.5px;top:78px;width:1px;height:17px;background:#444;"></div><div style="left:1543.5px;top:78px;width:1px;height:17px;background:#444;"></div><div style="left:1546.0px;top:78px;width:1px;height:17px;background:#444;"></div><div style="left:1604px;top:78px;width:1px;height:17px;background:#444;"></div><div style="left:1606.5px;top:78px;width:1px;height:17px;background:#444;"></div><div style="left:1235px;top:76px;width:75px;height:20px;background:#454545;border-radius:3px;"></div><div style="left:1314px;top:76px;width:67px;height:20px;background:#454545;border-radius:3px;"></div><svg style="left:1239px;top:79px;" width="15" height="15" viewBox="0 0 15 15"><rect x=".6" y=".6" width="13.8" height="13.8" rx="1.5" fill="none" stroke="#c4c4c4" stroke-width="1.1"/><path d="M2.5 12.5L12.5 2.5" stroke="#c4c4c4" stroke-width=".9"/><circle cx="7.5" cy="7.5" r="2.6" fill="#454545" stroke="#f0633a" stroke-width="1.4"/></svg><span class="t" style="left:1254px;top:78.0px;height:16px;line-height:16px;color:#c6c6c6;font-size:12.5px;letter-spacing:0.2px;">Center</span><svg style="left:1295.75px;top:84.0px;" width="8.5" height="5" viewBox="0 0 8.5 5"><path d="M0 0H8.5L4.25 5Z" fill="#c4c4c4"/></svg><svg style="left:1318px;top:79px;" width="16" height="16" viewBox="0 0 16 16"><path d="M7 1L13 4V10.5L7 13.5L1 10.5V4Z M1 4L7 7L13 4M7 7V13.5" fill="none" stroke="#c4c4c4" stroke-width="1.1" stroke-linejoin="round"/><circle cx="11" cy="12" r="2.5" fill="#454545" stroke="#f0633a" stroke-width="1.4"/></svg><span class="t" style="left:1333px;top:78.0px;height:16px;line-height:16px;color:#c6c6c6;font-size:12.5px;letter-spacing:0.2px;">Local</span><svg style="left:1366.75px;top:84.0px;" width="8.5" height="5" viewBox="0 0 8.5 5"><path d="M0 0H8.5L4.25 5Z" fill="#c4c4c4"/></svg><div style="left:1401px;top:76px;width:22px;height:20px;background:#3f5878;border-radius:3px 0 0 3px;"></div><div style="left:1424px;top:76px;width:14px;height:20px;background:#3f5878;border-radius:0 3px 3px 0;"></div><svg style="left:1405px;top:79px;" width="15" height="15" viewBox="0 0 15 15"><path d="M2.5 0V12.5M6 0V12.5M9.5 0V6M0 2.5H12.5M0 6H12.5M0 9.5H7" stroke="#f0f0f0" stroke-width="1.1"/><path d="M7.6 7.2L10.6 11.2L13.6 7.2M10.6 11.2V14.6" stroke="#f8f8f8" stroke-width="1.7" fill="none"/></svg><svg style="left:1426.75px;top:84.0px;" width="8.5" height="5" viewBox="0 0 8.5 5"><path d="M0 0H8.5L4.25 5Z" fill="#e0e0e0"/></svg><div style="left:1442px;top:76px;width:22px;height:20px;background:#3a3a3a;border-radius:3px 0 0 3px;"></div><div style="left:1465px;top:76px;width:14px;height:20px;background:#3a3a3a;border-radius:0 3px 3px 0;"></div><svg style="left:1446px;top:79px;" width="15" height="15" viewBox="0 0 15 15"><path d="M2.5 0V12.5M6 0V7M9.5 0V6M0 2.5H12.5M0 6H5M0 9.5H4" stroke="#7a7a7a" stroke-width="1"/><rect x="5.2" y="7.8" width="2" height="2" fill="#9a9a9a"/><rect x="5.2" y="12" width="2" height="2" fill="#9a9a9a"/><path d="M8.5 8.8H11.2a2.1 2.1 0 0 1 0 4.2H8.5" stroke="#c6532f" stroke-width="2" fill="none"/></svg><svg style="left:1467.75px;top:84.0px;" width="8.5" height="5" viewBox="0 0 8.5 5"><path d="M0 0H8.5L4.25 5Z" fill="#6a6a6a"/></svg><div style="left:1483px;top:76px;width:36px;height:20px;background:#454545;border-radius:3px;"></div><svg style="left:1487px;top:80px;" width="14" height="13" viewBox="0 0 14 13"><path d="M.6 0V13M13.4 0V13" stroke="#c4c4c4" stroke-width="1.1"/><path d="M3.2 3V10M5.7 1.5V11.5M8.3 3V10M10.8 1.5V11.5" stroke="#c4c4c4" stroke-width="1"/><path d="M.6 6.5H13.4" stroke="#c4c4c4" stroke-width=".8"/></svg><svg style="left:1504.75px;top:84.0px;" width="8.5" height="5" viewBox="0 0 8.5 5"><path d="M0 0H8.5L4.25 5Z" fill="#c4c4c4"/></svg><div style="left:1553px;top:76px;width:41px;height:20px;background:#454545;border-radius:3px;"></div><span class="t" style="left:1558.3px;top:78.5px;height:16px;line-height:16px;color:#c6c6c6;font-size:10px;font-weight:700;letter-spacing:0.05px;">MSAA</span><div style="left:1614px;top:76px;width:36px;height:20px;background:#454545;border-radius:3px;"></div><svg style="left:1618px;top:79px;" width="15" height="15" viewBox="0 0 15 15"><circle cx="7.5" cy="7.5" r="6.3" fill="none" stroke="#c4c4c4" stroke-width="1.3"/><path d="M7.5 1.2A6.3 6.3 0 0 0 3 12A8 8 0 0 1 7.5 1.2Z" fill="#c4c4c4"/></svg><svg style="left:1635.75px;top:84.0px;" width="8.5" height="5" viewBox="0 0 8.5 5"><path d="M0 0H8.5L4.25 5Z" fill="#c4c4c4"/></svg><div style="left:1654px;top:76px;width:32px;height:20px;background:#454545;border-radius:3px;"></div><span class="t" style="left:1663.5px;top:78.5px;height:16px;line-height:16px;color:#c6c6c6;font-size:10.5px;font-weight:700;letter-spacing:0.05px;">2D</span><div style="left:1690px;top:76px;width:32px;height:20px;background:#3f5878;border-radius:3px;"></div><svg style="left:1701px;top:79px;" width="10" height="14" viewBox="0 0 10 14"><path d="M5 .5a4.3 4.3 0 0 1 2.3 8V10H2.7V8.5A4.3 4.3 0 0 1 5 .5Z" fill="#f0f0f0"/><rect x="3" y="11" width="4" height="2.2" rx=".8" fill="#f0f0f0"/></svg><div style="left:1726px;top:76px;width:32px;height:20px;background:#454545;border-radius:3px;"></div><svg style="left:1735px;top:80px;" width="15" height="12" viewBox="0 0 15 12"><path d="M0 4H2.5L6 1V11L2.5 8H0Z" fill="#c4c4c4"/><path d="M8.5 3.5L13 9.5M13 3.5L8.5 9.5" stroke="#c4c4c4" stroke-width="1.2"/></svg><div style="left:1762px;top:76px;width:22px;height:20px;background:#3f5878;border-radius:3px 0 0 3px;"></div><div style="left:1785px;top:76px;width:14px;height:20px;background:#3f5878;border-radius:0 3px 3px 0;"></div><svg style="left:1766px;top:80px;" width="14" height="13" viewBox="0 0 14 13"><path d="M7 4L13 7L7 10L1 7Z" fill="#f0f0f0"/><path d="M1 9.5L7 12.5L13 9.5" fill="none" stroke="#f0f0f0" stroke-width="1.2"/><path d="M5 0L5.8 2L8 2.2L6.3 3.5L6.8 5.6L5 4.5L3.2 5.6L3.7 3.5L2 2.2L4.2 2Z" fill="#f0f0f0"/></svg><svg style="left:1787.75px;top:84.0px;" width="8.5" height="5" viewBox="0 0 8.5 5"><path d="M0 0H8.5L4.25 5Z" fill="#e0e0e0"/></svg><div style="left:1803px;top:76px;width:32px;height:20px;background:#3f5878;border-radius:3px;"></div><svg style="left:1811px;top:80px;" width="16" height="12" viewBox="0 0 16 12"><path d="M.8 6C3 2.5 6 1.8 8 1.8S13 2.5 15.2 6C13 9.5 10 10.2 8 10.2S3 9.5 .8 6Z" fill="none" stroke="#f0f0f0" stroke-width="1.2"/><circle cx="8" cy="6" r="2.2" fill="#f0f0f0"/><path d="M3 11.5L13 .5" stroke="#f0f0f0" stroke-width="1.3"/></svg><div style="left:1839px;top:76px;width:36px;height:20px;background:#454545;border-radius:3px;"></div><svg style="left:1843px;top:81px;" width="13" height="10" viewBox="0 0 13 10"><rect x="0" y="1" width="8.5" height="8" rx="1" fill="#c4c4c4"/><path d="M9.3 4L12.5 1.5V8.5L9.3 6Z" fill="#c4c4c4"/></svg><svg style="left:1860.75px;top:84.0px;" width="8.5" height="5" viewBox="0 0 8.5 5"><path d="M0 0H8.5L4.25 5Z" fill="#c4c4c4"/></svg><div style="left:1879px;top:76px;width:22px;height:20px;background:#3f5878;border-radius:3px 0 0 3px;"></div><div style="left:1902px;top:76px;width:14px;height:20px;background:#3f5878;border-radius:0 3px 3px 0;"></div><svg style="left:1882px;top:79px;" width="15" height="15" viewBox="0 0 15 15"><circle cx="7.5" cy="7.5" r="6.3" fill="none" stroke="#f0f0f0" stroke-width="1.3"/><ellipse cx="7.5" cy="7.5" rx="2.6" ry="6.3" fill="none" stroke="#f0f0f0" stroke-width="1"/><path d="M1.2 7.5H13.8" stroke="#f0f0f0" stroke-width="1"/><circle cx="7.5" cy="7.5" r="1.6" fill="#f0f0f0"/></svg><svg style="left:1904.75px;top:84.0px;" width="8.5" height="5" viewBox="0 0 8.5 5"><path d="M0 0H8.5L4.25 5Z" fill="#e0e0e0"/></svg><svg style="left:1219px;top:99px;overflow:hidden;" width="701" height="624" viewBox="0 0 701 624"><defs><linearGradient id="sky" x1="0" y1="0" x2="0" y2="1"><stop offset="0.0000" stop-color="#4a5b80"/><stop offset="0.0817" stop-color="#52648a"/><stop offset="0.1779" stop-color="#5d6f95"/><stop offset="0.2740" stop-color="#7285b0"/><stop offset="0.3702" stop-color="#93acd6"/><stop offset="0.4054" stop-color="#aac5ea"/><stop offset="0.4327" stop-color="#c4dff8"/><stop offset="0.4551" stop-color="#e0fbff"/><stop offset="0.4776" stop-color="#f2ffff"/><stop offset="0.4856" stop-color="#d0e4e6"/><stop offset="0.4952" stop-color="#a0aaaa"/><stop offset="0.5040" stop-color="#6a6868"/><stop offset="0.5128" stop-color="#605c5c"/><stop offset="0.5625" stop-color="#5d5955"/><stop offset="1.0000" stop-color="#5b5752"/></linearGradient><linearGradient id="tail" x1="0" y1="0" x2="1" y2="0"><stop offset="0" stop-color="#e9e3ec"/><stop offset=".35" stop-color="#ebebed"/><stop offset="1" stop-color="#e6e6e8"/></linearGradient><linearGradient id="leg" x1="0" y1="0" x2="1" y2="0"><stop offset="0" stop-color="#161616"/><stop offset=".12" stop-color="#1e1e1e"/><stop offset=".8" stop-color="#1f1f1f"/><stop offset="1" stop-color="#303030"/></linearGradient><linearGradient id="sole" x1="0" y1="0" x2="0" y2="1"><stop offset="0" stop-color="#4a0f24"/><stop offset="1" stop-color="#2a0612"/></linearGradient></defs><rect x="0" y="0" width="701" height="624" fill="url(#sky)"/><polygon points="533.0,0.0 607.0,0.0 618.0,32.5 581.0,40.0 548.5,44.5 533.0,43.0" fill="#201b1c"/><polygon points="533.0,14.2 545.0,16.0 569.0,13.5 585.5,11.9 586.0,22.8 569.0,24.5 545.0,26.8 533.0,25.0" fill="#5e1216"/><polygon points="587.0,0.0 607.0,0.0 618.0,32.5 603.0,28.0 612.0,22.0 588.0,28.0 587.5,21.0 605.0,13.0" fill="#3a3132"/><polygon points="602.0,0.0 607.0,0.0 610.0,9.0 605.0,7.0" fill="#a03a3a"/><path d="M544 0L547 44M568 0L573 42" stroke="#2e2829" stroke-width="1"/><path d="M594 8.5H610M594 11H610" stroke="#6c6c6c" stroke-width="0.9"/><polygon points="393.0,51.0 432.0,51.0 430.5,301.0 428.0,343.0 422.0,381.0 417.0,436.0 344.0,437.0 363.0,391.0 374.0,341.0 381.0,301.0 386.0,282.0 395.0,207.0 398.0,141.0" fill="#1b1b1c"/><polygon points="383.0,0.0 421.0,0.0 422.0,53.0 393.0,53.0" fill="#fbe4d6"/><polygon points="422.0,54.0 531.0,54.0 523.0,146.0 516.0,237.0 513.5,281.0 511.0,331.0 506.0,381.0 500.0,433.0 434.0,438.0 431.0,389.0 427.7,344.0 428.0,301.0 431.0,207.0" fill="url(#leg)"/><polygon points="419.0,0.0 533.5,0.0 531.0,56.0 422.0,56.0" fill="#fff4ea"/><polygon points="417.5,0.0 419.5,0.0 422.5,53.0 421.0,53.0" fill="#e8b8a8"/><defs><clipPath id="cB"><polygon points="343.0,437.0 326.0,454.0 311.0,481.0 308.0,498.0 314.0,507.0 337.0,510.0 343.0,486.0"/></clipPath></defs><polygon points="343.0,437.0 326.0,454.0 311.0,481.0 308.0,498.0 314.0,507.0 337.0,510.0 343.0,486.0" fill="#17110f"/><g clip-path="url(#cB)"><polygon points="343.0,439.0 309.0,497.0 315.0,505.0" fill="#6a1624"/><polygon points="344.0,446.0 322.0,508.0 330.0,511.0" fill="#6a1624"/><polygon points="345.0,461.0 336.0,511.0 341.0,512.0" fill="#6a1624"/></g><path d="M344,435 L421,438 L429,501 L429,569 L346,566 Q341,511 344,435Z" fill="#151515"/><path d="M346,564 Q381,573 429,577 L429,603 L352,605Z" fill="url(#sole)"/><path d="M429,438 L499,433 L522,518 Q556,523 571,546 Q581,566 576,583 L426,569 Q421,501 429,438Z" fill="#171717"/><path d="M425.5,565 Q481,577 578,579 L576,591 Q531,595 501,593 L498,608 L430,609.5Z" fill="url(#sole)"/><rect x="344" y="435" width="77" height="14" fill="#0a0a0a"/><rect x="429" y="437" width="40" height="12" fill="#0c0c0c"/><defs><clipPath id="cL"><polygon points="497.0,448.0 465.0,425.5 460.5,429.0 460.0,443.0 470.0,480.0 474.0,483.5 486.0,476.0 498.0,454.0"/></clipPath><clipPath id="cR"><polygon points="504.0,448.0 522.0,425.0 526.5,424.0 529.0,442.0 529.5,477.0 526.0,480.0 510.0,470.0 504.0,454.0"/></clipPath><clipPath id="cTL"><polygon points="494.0,457.0 503.0,459.0 497.0,518.5 478.0,514.5"/></clipPath><clipPath id="cTR"><polygon points="502.0,457.0 511.0,456.0 531.5,507.0 517.0,512.5"/></clipPath></defs><polygon points="497.0,448.0 465.0,425.5 460.5,429.0 460.0,443.0 470.0,480.0 474.0,483.5 486.0,476.0 498.0,454.0" fill="#17110f"/><g clip-path="url(#cL)"><polygon points="501.0,450.0 448.8,413.8 451.8,431.2" fill="#731a29"/><polygon points="501.0,450.0 454.5,446.6 457.5,464.0" fill="#731a29"/><polygon points="501.0,450.0 460.2,479.5 463.4,497.8" fill="#731a29"/></g><polygon points="504.0,448.0 522.0,425.0 526.5,424.0 529.0,442.0 529.5,477.0 526.0,480.0 510.0,470.0 504.0,454.0" fill="#17110f"/><g clip-path="url(#cR)"><polygon points="501.0,450.0 535.1,409.5 536.6,426.6" fill="#731a29"/><polygon points="501.0,450.0 538.0,441.9 539.5,459.0" fill="#731a29"/><polygon points="501.0,450.0 540.8,474.2 542.4,492.3" fill="#731a29"/></g><polygon points="494.0,457.0 503.0,459.0 497.0,518.5 478.0,514.5" fill="#17110f"/><g clip-path="url(#cTL)"><polygon points="494.9,457.2 496.9,457.6 484.1,515.8 479.9,514.9" fill="#731a29"/><polygon points="499.0,458.1 501.2,458.6 493.2,517.7 488.5,516.7" fill="#731a29"/></g><polygon points="502.0,457.0 511.0,456.0 531.5,507.0 517.0,512.5" fill="#17110f"/><g clip-path="url(#cTR)"><polygon points="502.9,456.9 504.9,456.7 521.6,510.7 518.5,512.0" fill="#731a29"/><polygon points="507.0,456.5 509.2,456.2 528.6,508.1 525.0,509.5" fill="#731a29"/></g><ellipse cx="501.5" cy="451" rx="4.2" ry="7.5" fill="#2a0c12"/><ellipse cx="501.5" cy="451" rx="1.6" ry="7" fill="#7c1b2b"/><path d="M512,498L526,523" stroke="#e8e8e8" stroke-width="1.6"/><path d="M345,452L421,454L429,473" stroke="#2c2c2c" stroke-width="2" fill="none"/><path d="M192 0C189.3 6.7 181.5 25.7 176.0 40.0C170.5 54.3 162.5 75.0 159.0 86.0C155.5 97.0 155.7 102.7 155.0 106.0L109.0 146.0L147.0 133.0C143.5 143.2 134.3 176.0 126.0 194.0C117.7 212.0 104.7 230.7 97.0 241.0C89.3 251.3 82.8 253.5 80.0 256.0L43.0 289.0L15.0 277.0L29.0 293.0L0.0 291.0L0.0 562.0L20.0 567.0C23.7 570.7 33.5 583.2 42.0 589.0C50.5 594.8 59.2 599.6 71.0 602.0C82.8 604.4 100.7 604.6 113.0 603.5C125.3 602.4 136.0 599.2 145.0 595.5C154.0 591.8 158.5 586.2 167.0 581.0C175.5 575.8 191.2 566.8 196.0 564.0L224.5 594.0L228.0 556.0C230.7 551.2 236.7 536.7 244.0 527.0C251.3 517.3 264.7 505.5 272.0 498.0C279.3 490.5 281.0 486.2 288.0 482.0C295.0 477.8 306.8 477.7 314.0 473.0C321.2 468.3 325.8 460.7 331.0 454.0C336.2 447.3 339.7 443.5 345.0 433.0C350.3 422.5 358.2 406.3 363.0 391.0C367.8 375.7 371.0 356.0 374.0 341.0C377.0 326.0 379.0 310.8 381.0 301.0C383.0 291.2 383.7 297.7 386.0 282.0C388.3 266.3 393.0 230.5 395.0 207.0C397.0 183.5 398.3 166.7 398.0 141.0C397.7 115.3 395.5 76.5 393.0 53.0C390.5 29.5 384.7 8.8 383.0 0.0Z" fill="url(#tail)"/><g fill="none" stroke="#c9c9cd" stroke-width="1.2"><path d="M224,101 L238,151 Q256,136 266,111"/><path d="M333,101 L332,267 Q361,256 379,201"/><path d="M79,256 Q121,261 156,236"/><path d="M17,281 Q81,341 171,321 Q231,301 261,291"/><path d="M131,376 Q201,381 251,321"/><path d="M131,376 Q161,441 261,456 Q311,453 341,421"/><path d="M0,341 Q81,401 141,401"/><path d="M0,421 Q121,501 281,481"/><path d="M0,511 Q111,561 221,531"/><path d="M0,556 Q81,569 196,564"/><path d="M201,11 Q181,161 81,281" stroke="#dcd8e0" stroke-width="3"/><path d="M281,11 Q271,201 181,321" stroke="#dcdce0" stroke-width="2"/></g></svg><div style="left:1221px;top:101px;width:38px;height:147px;background:#14171c;border-radius:3px;"></div><div style="left:1232px;top:106.8px;width:16px;height:1px;background:#4e4e4e;"></div><div style="left:1232px;top:110.3px;width:16px;height:1px;background:#4e4e4e;"></div><div style="left:1224px;top:119px;width:32px;height:20px;background:#454545;border-radius:3px 3px 0 0;"></div><div style="left:1224px;top:140px;width:32px;height:20px;background:#3c5577;border-radius:0;"></div><div style="left:1224px;top:161px;width:32px;height:20px;background:#454545;border-radius:0;"></div><div style="left:1224px;top:182px;width:32px;height:20px;background:#454545;border-radius:0;"></div><div style="left:1224px;top:203px;width:32px;height:20px;background:#454545;border-radius:0;"></div><div style="left:1224px;top:224px;width:32px;height:20px;background:#454545;border-radius:0 0 3px 3px;"></div><svg style="left:1232px;top:121px;" width="16" height="16" viewBox="0 0 16 16"><path d="M4.3 8.5L3.4 3.2M6.8 7.5L6.5 1.6M9.3 7.5L9.7 1.8M11.6 8.5L12.6 3.6" stroke="#d0d0d0" stroke-width="1.9" stroke-linecap="round" fill="none"/><path d="M3.6 7.5H12.2L12 11Q11 15 8 15Q5.5 15 4.2 12.5L1.2 8.6Q1.8 7.4 3 8.4L4 9.6Z" fill="#d0d0d0"/></svg><svg style="left:1232px;top:142px;" width="16" height="16" viewBox="0 0 16 16"><path d="M8 1V15M1 8H15" stroke="#d0d0d0" stroke-width="1.2"/><path d="M8 0L10.3 3H5.7ZM8 16L10.3 13H5.7ZM0 8L3 5.7V10.3ZM16 8L13 5.7V10.3Z" fill="#d0d0d0"/></svg><svg style="left:1232px;top:163px;" width="16" height="16" viewBox="0 0 16 16"><path d="M13.5 5A6.2 6.2 0 0 0 2 6.5M2.5 11A6.2 6.2 0 0 0 14 9.5" fill="none" stroke="#d0d0d0" stroke-width="1.3"/><path d="M14.5 1.5V5.5H10.5M1.5 14.5V10.5H5.5" fill="none" stroke="#d0d0d0" stroke-width="1.3"/></svg><svg style="left:1233px;top:185px;" width="14" height="14" viewBox="0 0 14 14"><rect x=".6" y=".6" width="12.8" height="12.8" fill="none" stroke="#d0d0d0" stroke-width="1.2"/><rect x=".6" y="8" width="5.4" height="5.4" fill="none" stroke="#d0d0d0" stroke-width="1.2"/><path d="M6.5 7.5L11 3M7.5 2.8H11.2V6.5" fill="none" stroke="#d0d0d0" stroke-width="1.2"/></svg><svg style="left:1233px;top:206px;" width="14" height="14" viewBox="0 0 14 14"><rect x="2" y="2" width="10" height="10" fill="none" stroke="#d0d0d0" stroke-width="1.1"/><rect x="0" y="0" width="3.6" height="3.6" fill="#d0d0d0"/><rect x="10.4" y="0" width="3.6" height="3.6" fill="#d0d0d0"/><rect x="0" y="10.4" width="3.6" height="3.6" fill="#d0d0d0"/><rect x="10.4" y="10.4" width="3.6" height="3.6" fill="#d0d0d0"/></svg><svg style="left:1232px;top:226px;" width="16" height="16" viewBox="0 0 16 16"><circle cx="8" cy="8" r="5.2" fill="none" stroke="#d0d0d0" stroke-width="1.1"/><path d="M8 2V14M2 8H14" stroke="#d0d0d0" stroke-width="1"/><path d="M8 .5L9.8 3H6.2ZM8 15.5L9.8 13H6.2ZM.5 8L3 6.2V9.8ZM15.5 8L13 6.2V9.8Z" fill="#d0d0d0"/><path d="M1 3V1H3M13 1H15V3M1 13V15H3M13 15H15V13" fill="none" stroke="#d0d0d0" stroke-width="1"/></svg><svg style="left:1840px;top:120px;" width="60" height="64" viewBox="0 0 60 64"><polygon points="18.0,6.5 32.6,6.5 25.3,24.0" fill="#8fe04a"/><ellipse cx="25.299999999999955" cy="6.5" rx="7.3" ry="1.8" fill="#a6ee62"/><polygon points="25.3,39.0 19.2,56.5 31.4,56.5" fill="#d4d4d4"/><ellipse cx="25.299999999999955" cy="56.5" rx="6.1" ry="1.6" fill="#bdbdbd"/><polygon points="17.0,31.3 4.0,25.0 4.0,37.6" fill="#d0d0d0"/><ellipse cx="4" cy="31.30000000000001" rx="2.6" ry="6.3" fill="#b8b8b8"/><polygon points="38.0,30.0 48.0,23.5 49.0,32.0" fill="#3a6fd8"/><polygon points="33.5,31.3 46.0,25.2 46.0,37.4" fill="#d83a3a"/><ellipse cx="46" cy="31.30000000000001" rx="2.6" ry="6.1" fill="#c23030"/><rect x="16.5" y="24.5" width="17.5" height="13.6" rx="1.5" fill="#e2e2e2"/></svg><span class="t" style="left:1860.5px;top:108.5px;height:16px;line-height:16px;color:#e8e8e8;font-size:11.5px;font-weight:700;letter-spacing:0.07px;">y</span><span class="t" style="left:1889.5px;top:143.0px;height:16px;line-height:16px;color:#e8e8e8;font-size:10px;font-weight:700;letter-spacing:0.07px;">x</span><svg style="left:1892px;top:115px;" width="9" height="10" viewBox="0 0 9 10"><rect x=".5" y="4" width="8" height="5.5" rx="1" fill="#d0d0d0"/><path d="M4.8 4V2.6a2 2 0 0 1 3.6 -.6" fill="none" stroke="#d0d0d0" stroke-width="1.1"/></svg><svg style="left:1842px;top:197px;" width="9" height="8" viewBox="0 0 9 8"><path d="M0 1H9M0 4H9M0 7H9" stroke="#d0d4dc" stroke-width="1.1"/></svg><span class="t" style="left:1855px;top:193.5px;height:16px;line-height:16px;color:#d0d4dc;font-size:12.5px;letter-spacing:0.1px;">Right</span><!-- p_br --><div style="left:1219px;top:725px;width:467px;height:333px;background:#313131;"></div><div style="left:1219px;top:725px;width:467px;height:19px;background:#242424;"></div><div style="left:1219px;top:725px;width:81px;height:20px;background:#353535;border-radius:3px 3px 0 0;"></div><svg style="left:1227px;top:730px;" width="12" height="10" viewBox="0 0 12 10"><path d="M0 10V1Q0 0 1 0H4.5L6 1.8H11Q12 1.8 12 2.8V10Z" fill="#c4c4c4"/></svg><span class="t" style="left:1243px;top:727.5px;height:16px;line-height:16px;color:#d6d6d6;font-size:12.5px;letter-spacing:0.07px;">Project</span><svg style="left:1311px;top:729px;" width="10" height="11" viewBox="0 0 10 11"><rect x="0" y="0" width="10" height="10.6" rx="1" fill="#c4c4c4"/><path d="M1.5 2.6H8.5M1.5 5.3H7M1.5 8H8.5" stroke="#242424" stroke-width="1.1"/></svg><span class="t" style="left:1325px;top:727.5px;height:16px;line-height:16px;color:#d6d6d6;font-size:12.5px;letter-spacing:0.12px;">Console</span><svg style="left:1651px;top:729px;" width="9" height="11" viewBox="0 0 9 11"><rect x="0.7" y="5" width="7.6" height="5.3" fill="none" stroke="#c4c4c4" stroke-width="1.2"/><path d="M2.2 5V3a2.3 2.3 0 0 1 4.6 0" fill="none" stroke="#c4c4c4" stroke-width="1.2"/></svg><svg style="left:1671.5px;top:728.5px;" width="3" height="12" viewBox="0 0 3 12"><circle cx="1.5" cy="1.5" r="1.3" fill="#c4c4c4"/><circle cx="1.5" cy="6" r="1.3" fill="#c4c4c4"/><circle cx="1.5" cy="10.5" r="1.3" fill="#c4c4c4"/></svg><div style="left:1219px;top:744px;width:467px;height:20px;background:#353535;"></div><div style="left:1219px;top:764px;width:467px;height:1px;background:#222;"></div><svg style="left:1226px;top:748px;" width="12" height="12" viewBox="0 0 12 12"><path d="M6 0V12M0 6H12" stroke="#c4c4c4" stroke-width="1.8"/></svg><svg style="left:1241.75px;top:751.5px;" width="8.5" height="5" viewBox="0 0 8.5 5"><path d="M0 0H8.5L4.25 5Z" fill="#c4c4c4"/></svg><div style="left:1254px;top:745px;width:1px;height:19px;background:#282828;"></div><div style="left:1255px;top:745px;width:8px;height:19px;background:#2f2f2f;"></div><div style="left:1263px;top:745px;width:1px;height:19px;background:#282828;"></div><div style="left:1264px;top:746px;width:257px;height:16px;background:#252525;border:1px solid #1e1e1e;border-top-color:#111;border-radius:3px 0 0 3px;"></div><svg style="left:1268px;top:750px;" width="9" height="9" viewBox="0 0 9 9"><circle cx="3.3" cy="3.3" r="2.4" fill="none" stroke="#c4c4c4" stroke-width="1.2"/><path d="M5 5L7.6 7.8" stroke="#c4c4c4" stroke-width="1.4"/></svg><div style="left:1521px;top:746px;width:18px;height:16px;background:#252525;border:1px solid #1e1e1e;border-radius:0 3px 3px 0;"></div><svg style="left:1524px;top:748px;" width="12" height="12" viewBox="0 0 12 12"><rect x=".6" y="4.5" width="7" height="7" fill="none" stroke="#c4c4c4" stroke-width="1.1"/><path d="M4 .6H11.4V8" fill="none" stroke="#c4c4c4" stroke-width="1.1"/><path d="M3 9L8.5 3.5M5.5 3.2H8.8V6.5" fill="none" stroke="#c4c4c4" stroke-width="1.1"/></svg><div style="left:1541px;top:745px;width:1px;height:19px;background:#262626;"></div><div style="left:1567px;top:745px;width:1px;height:19px;background:#262626;"></div><div style="left:1593px;top:745px;width:1px;height:19px;background:#262626;"></div><div style="left:1619px;top:745px;width:1px;height:19px;background:#262626;"></div><div style="left:1645px;top:745px;width:1px;height:19px;background:#262626;"></div><svg style="left:1548px;top:748px;" width="13" height="12" viewBox="0 0 13 12"><rect x="2" y="0" width="5.6" height="4.6" fill="#c4c4c4"/><circle cx="3.8" cy="8.6" r="3.5" fill="#c4c4c4"/><path d="M7.6 9L10.2 3.8L12.8 9Z" fill="#c4c4c4"/></svg><svg style="left:1574px;top:749px;" width="12" height="11" viewBox="0 0 12 11"><path d="M1 6L6.5 .8H11V5.2L5.5 10.5Z" fill="#c4c4c4"/><circle cx="8.8" cy="3" r="1" fill="#353535"/></svg><svg style="left:1599px;top:747px;" width="14" height="14" viewBox="0 0 14 14"><circle cx="7" cy="7" r="6.5" fill="#c4c4c4"/><rect x="6.1" y="3" width="1.8" height="5.2" fill="#353535"/><circle cx="7" cy="10.3" r="1" fill="#353535"/></svg><svg style="left:1626px;top:748px;" width="12" height="12" viewBox="0 0 12 12"><path d="M6 .5L7.6 4.3L11.7 4.6L8.6 7.3L9.6 11.3L6 9.1L2.4 11.3L3.4 7.3L.3 4.6L4.4 4.3Z" fill="#8a8a8a"/></svg><svg style="left:1650px;top:748px;" width="16" height="12" viewBox="0 0 16 12"><path d="M.8 6C3 2.5 6 1.8 8 1.8S13 2.5 15.2 6C13 9.5 10 10.2 8 10.2S3 9.5 .8 6Z" fill="none" stroke="#c4c4c4" stroke-width="1.2"/><circle cx="8" cy="6" r="2.4" fill="#c4c4c4"/><path d="M3 11.5L13 .5" stroke="#c4c4c4" stroke-width="1.3"/></svg><span class="t" style="left:1667px;top:746.5px;height:16px;line-height:16px;color:#c6c6c6;font-size:12.5px;letter-spacing:0.07px;">29</span><div style="left:1219px;top:892px;width:195px;height:16px;background:#3e3e3e;"></div><svg style="left:1222px;top:768.5px;" width="10" height="8" viewBox="0 0 10 8"><path d="M0 0H10L5 8Z" fill="#636363"/></svg><svg style="left:1237.0px;top:767px;" width="12" height="12" viewBox="0 0 12 12"><path d="M6 .5L7.6 4.3L11.7 4.6L8.6 7.3L9.6 11.3L6 9.1L2.4 11.3L3.4 7.3L.3 4.6L4.4 4.3Z" fill="#d0d0d0"/></svg><span class="t" style="left:1254px;top:764.5px;height:16px;line-height:16px;color:#e4e4e4;font-size:12.5px;font-weight:700;letter-spacing:-0.18px;">Favorites</span><svg style="left:1251.0px;top:783px;" width="12" height="12" viewBox="0 0 12 12"><circle cx="4.6" cy="4.6" r="3.8" fill="none" stroke="#c4c4c4" stroke-width="1.1"/><path d="M7.4 7.4L11 11" stroke="#c4c4c4" stroke-width="1.4"/></svg><span class="t" style="left:1267.5px;top:780.5px;height:16px;line-height:16px;color:#d6d6d6;font-size:12.5px;letter-spacing:0.08px;">All Materials</span><svg style="left:1251.0px;top:799px;" width="12" height="12" viewBox="0 0 12 12"><circle cx="4.6" cy="4.6" r="3.8" fill="none" stroke="#c4c4c4" stroke-width="1.1"/><path d="M7.4 7.4L11 11" stroke="#c4c4c4" stroke-width="1.4"/></svg><span class="t" style="left:1267.5px;top:796.5px;height:16px;line-height:16px;color:#d6d6d6;font-size:12.5px;letter-spacing:0.08px;">All Models</span><svg style="left:1251.0px;top:815px;" width="12" height="12" viewBox="0 0 12 12"><circle cx="4.6" cy="4.6" r="3.8" fill="none" stroke="#c4c4c4" stroke-width="1.1"/><path d="M7.4 7.4L11 11" stroke="#c4c4c4" stroke-width="1.4"/></svg><span class="t" style="left:1267.5px;top:812.5px;height:16px;line-height:16px;color:#d6d6d6;font-size:12.5px;letter-spacing:0.08px;">All Prefabs</span><svg style="left:1222px;top:847.5px;" width="10" height="8" viewBox="0 0 10 8"><path d="M0 0H10L5 8Z" fill="#636363"/></svg><svg style="left:1237.5px;top:846px;height:11.5px;" width="13.5" height="12" viewBox="0 0 15 12"><path d="M.6 11V1.6Q.6 .6 1.6 .6H5L6.4 2.4H11.4Q12.4 2.4 12.4 3.4V4.6" fill="none" stroke="#c4c4c4" stroke-width="1.2"/><path d="M.8 11.4L3.2 5H14.6L12.2 11.4Z" fill="#c4c4c4"/></svg><span class="t" style="left:1254px;top:843.5px;height:16px;line-height:16px;color:#e4e4e4;font-size:12.5px;font-weight:700;">Assets</span><div style="left:1250.5px;top:860px;width:162.5px;height:16px;background:#343434;"></div><svg style="left:1235.5px;top:863.5px;" width="10" height="8" viewBox="0 0 10 8"><path d="M0 0H10L5 8Z" fill="#636363"/></svg><svg style="left:1251.0px;top:862px;height:11.5px;" width="13.5" height="12" viewBox="0 0 15 12"><path d="M.6 11V1.6Q.6 .6 1.6 .6H5L6.4 2.4H11.4Q12.4 2.4 12.4 3.4V4.6" fill="none" stroke="#c4c4c4" stroke-width="1.2"/><path d="M.8 11.4L3.2 5H14.6L12.2 11.4Z" fill="#c4c4c4"/></svg><span class="t" style="left:1266.0px;top:859.5px;height:16px;line-height:16px;color:#d6d6d6;font-size:12.5px;letter-spacing:0.08px;">_walkingParticleSystem</span><svg style="left:1264.5px;top:878px;" width="15" height="12" viewBox="0 0 15 12"><path d="M.3 10.6V1.4Q.3 .4 1.3 .4H4.6L5.9 2H11.6Q12.6 2 12.6 3V10.6Z" fill="#c4c4c4"/><rect x="5.5" y="4" width="9" height="9" fill="#313131"/><rect x="6" y="4.5" width="8" height="8" rx="1" fill="#f0f0f0"/><path d="M7.5 8H11M7.5 10H10" stroke="#555" stroke-width="1"/></svg><span class="t" style="left:1279.5px;top:875.5px;height:16px;line-height:16px;color:#d6d6d6;font-size:12.5px;letter-spacing:0.08px;">_docs</span><svg style="left:1264.5px;top:894px;" width="15" height="12" viewBox="0 0 15 12"><path d="M.3 10.6V1.4Q.3 .4 1.3 .4H4.6L5.9 2H11.6Q12.6 2 12.6 3V10.6Z" fill="#c4c4c4"/><circle cx="10" cy="8.5" r="5" fill="#313131"/><circle cx="10" cy="8.5" r="4" fill="#313131" stroke="#7fd0fb" stroke-width="1.1"/><circle cx="9.4" cy="7.8" r="2.3" fill="#7fd0fb"/></svg><span class="t" style="left:1279.5px;top:891.5px;height:16px;line-height:16px;color:#d6d6d6;font-size:12.5px;letter-spacing:0.08px;">_Material</span><svg style="left:1249px;top:911.5px;" width="10" height="8" viewBox="0 0 10 8"><path d="M0 0H10L5 8Z" fill="#636363"/></svg><svg style="left:1264.5px;top:910px;height:11.5px;" width="13.5" height="12" viewBox="0 0 15 12"><path d="M.6 11V1.6Q.6 .6 1.6 .6H5L6.4 2.4H11.4Q12.4 2.4 12.4 3.4V4.6" fill="none" stroke="#c4c4c4" stroke-width="1.2"/><path d="M.8 11.4L3.2 5H14.6L12.2 11.4Z" fill="#c4c4c4"/></svg><span class="t" style="left:1279.5px;top:907.5px;height:16px;line-height:16px;color:#d6d6d6;font-size:12.5px;letter-spacing:0.08px;">_prefab</span><div style="left:1278px;top:924px;width:135px;height:16px;background:#343434;"></div><svg style="left:1278.5px;top:926px;" width="15" height="12" viewBox="0 0 15 12"><path d="M.3 10.6V1.4Q.3 .4 1.3 .4H4.6L5.9 2H11.6Q12.6 2 12.6 3V10.6Z" fill="#c4c4c4"/><path d="M10 3L15 5.5V11.3L10 13.8L5 11.3V5.5Z" fill="#313131"/><path d="M10 4L14 6V10.8L10 12.8L6 10.8V6Z" fill="#7fd0fb"/><path d="M6 6L10 8L14 6M10 8V12.8" stroke="#fff" stroke-width=".8" fill="none"/></svg><span class="t" style="left:1293.5px;top:923.5px;height:16px;line-height:16px;color:#d6d6d6;font-size:12.5px;letter-spacing:0.08px;">_mainPrefab</span><svg style="left:1278.5px;top:942px;" width="15" height="12" viewBox="0 0 15 12"><path d="M.3 10.6V1.4Q.3 .4 1.3 .4H4.6L5.9 2H11.6Q12.6 2 12.6 3V10.6Z" fill="#c4c4c4"/><path d="M10 3L15 5.5V11.3L10 13.8L5 11.3V5.5Z" fill="#313131"/><path d="M10 4L14 6V10.8L10 12.8L6 10.8V6Z" fill="#7fd0fb"/><path d="M6 6L10 8L14 6M10 8V12.8" stroke="#fff" stroke-width=".8" fill="none"/></svg><span class="t" style="left:1293.5px;top:939.5px;height:16px;line-height:16px;color:#d6d6d6;font-size:12.5px;letter-spacing:0.08px;">_subPrefab</span><div style="left:1264px;top:956px;width:149px;height:16px;background:#343434;"></div><svg style="left:1249px;top:959.5px;" width="10" height="8" viewBox="0 0 10 8"><path d="M0 0H10L5 8Z" fill="#636363"/></svg><svg style="left:1264.5px;top:958px;height:11.5px;" width="13.5" height="12" viewBox="0 0 15 12"><path d="M.6 11V1.6Q.6 .6 1.6 .6H5L6.4 2.4H11.4Q12.4 2.4 12.4 3.4V4.6" fill="none" stroke="#c4c4c4" stroke-width="1.2"/><path d="M.8 11.4L3.2 5H14.6L12.2 11.4Z" fill="#c4c4c4"/></svg><span class="t" style="left:1279.5px;top:955.5px;height:16px;line-height:16px;color:#d6d6d6;font-size:12.5px;letter-spacing:0.08px;">_texture</span><svg style="left:1278.5px;top:974px;" width="15" height="12" viewBox="0 0 15 12"><path d="M.3 10.6V1.4Q.3 .4 1.3 .4H4.6L5.9 2H11.6Q12.6 2 12.6 3V10.6Z" fill="#c4c4c4"/><rect x="4.8" y="3.8" width="10.4" height="9.4" fill="#313131"/><rect x="5.5" y="4.5" width="9" height="8" fill="#e8e8e8"/><path d="M6.5 11.5L9 8L10.5 10L12 8.8L13.5 11.5Z" fill="#bbb"/></svg><span class="t" style="left:1293.5px;top:971.5px;height:16px;line-height:16px;color:#d6d6d6;font-size:12.5px;letter-spacing:0.08px;">_menuIcon</span><div style="left:1278px;top:988px;width:135px;height:16px;background:#343434;"></div><svg style="left:1278.5px;top:990px;" width="15" height="12" viewBox="0 0 15 12"><path d="M.3 10.6V1.4Q.3 .4 1.3 .4H4.6L5.9 2H11.6Q12.6 2 12.6 3V10.6Z" fill="#c4c4c4"/><rect x="5.5" y="5" width="9.5" height="7.5" fill="#111"/><path d="M6.5 7V10.5M6.5 8.8H9.5M10.5 7H13.5V10.5H10.5" stroke="#e8413a" stroke-width="1.4" fill="none"/></svg><span class="t" style="left:1293.5px;top:987.5px;height:16px;line-height:16px;color:#d6d6d6;font-size:12.5px;letter-spacing:0.08px;">_systemParticle</span><svg style="left:1235.5px;top:1007.5px;" width="10" height="8" viewBox="0 0 10 8"><path d="M0 0H10L5 8Z" fill="#636363"/></svg><svg style="left:1251.0px;top:1006px;height:11.5px;" width="13.5" height="12" viewBox="0 0 15 12"><path d="M.6 11V1.6Q.6 .6 1.6 .6H5L6.4 2.4H11.4Q12.4 2.4 12.4 3.4V4.6" fill="none" stroke="#c4c4c4" stroke-width="1.2"/><path d="M.8 11.4L3.2 5H14.6L12.2 11.4Z" fill="#c4c4c4"/></svg><span class="t" style="left:1267.5px;top:1003.5px;height:16px;line-height:16px;color:#d6d6d6;font-size:12.5px;letter-spacing:0.08px;">Assets</span><div style="left:1264px;top:1020px;width:149px;height:16px;background:#343434;"></div><svg style="left:1249px;top:1023.5px;" width="10" height="8" viewBox="0 0 10 8"><path d="M0 0H10L5 8Z" fill="#636363"/></svg><svg style="left:1264.5px;top:1022px;height:11.5px;" width="13.5" height="12" viewBox="0 0 15 12"><path d="M.6 11V1.6Q.6 .6 1.6 .6H5L6.4 2.4H11.4Q12.4 2.4 12.4 3.4V4.6" fill="none" stroke="#c4c4c4" stroke-width="1.2"/><path d="M.8 11.4L3.2 5H14.6L12.2 11.4Z" fill="#c4c4c4"/></svg><span class="t" style="left:1281px;top:1019.5px;height:16px;line-height:16px;color:#d6d6d6;font-size:12.5px;letter-spacing:0.08px;">Avatar</span><svg style="left:1264.5px;top:1038.5px;" width="8" height="10" viewBox="0 0 8 10"><path d="M0 0V10L8 5Z" fill="#636363"/></svg><svg style="left:1278.5px;top:1038px;" width="15" height="12" viewBox="0 0 15 12"><path d="M.3 10.6V1.4Q.3 .4 1.3 .4H4.6L5.9 2H11.6Q12.6 2 12.6 3V10.6Z" fill="#c4c4c4"/><path d="M10 3L15 5.5V11.3L10 13.8L5 11.3V5.5Z" fill="#313131"/><path d="M10 4L14 6V10.8L10 12.8L6 10.8V6Z" fill="#7fd0fb"/><path d="M6 6L10 8L14 6M10 8V12.8" stroke="#fff" stroke-width=".8" fill="none"/></svg><span class="t" style="left:1295px;top:1035.5px;height:16px;line-height:16px;color:#d6d6d6;font-size:12.5px;letter-spacing:0.08px;">ELusion</span><div style="left:1219px;top:1052px;width:195px;height:6px;overflow:hidden;"><svg style="left:45.5px;top:0.5px;" width="8" height="10" viewBox="0 0 8 10"><path d="M0 0V10L8 5Z" fill="#636363"/></svg><span class="t" style="left:76px;top:-2.5px;height:16px;line-height:16px;color:#d6d6d6;font-size:12.5px;letter-spacing:0.07px;">Kinako</span></div><div style="left:1227px;top:860px;width:1px;height:198px;background:#4c4c4c;"></div><div style="left:1227px;top:868px;width:9px;height:1px;background:#4c4c4c;"></div><div style="left:1227px;top:1012px;width:9px;height:1px;background:#4c4c4c;"></div><div style="left:1241px;top:876px;width:1px;height:128px;background:#4c4c4c;"></div><div style="left:1241px;top:884px;width:21px;height:1px;background:#4c4c4c;"></div><div style="left:1241px;top:900px;width:21px;height:1px;background:#4c4c4c;"></div><div style="left:1241px;top:916px;width:9px;height:1px;background:#4c4c4c;"></div><div style="left:1241px;top:964px;width:9px;height:1px;background:#4c4c4c;"></div><div style="left:1255px;top:924px;width:1px;height:24px;background:#4c4c4c;"></div><div style="left:1255px;top:932px;width:21px;height:1px;background:#4c4c4c;"></div><div style="left:1255px;top:948px;width:21px;height:1px;background:#4c4c4c;"></div><div style="left:1255px;top:972px;width:1px;height:24px;background:#4c4c4c;"></div><div style="left:1255px;top:980px;width:21px;height:1px;background:#4c4c4c;"></div><div style="left:1255px;top:996px;width:21px;height:1px;background:#4c4c4c;"></div><div style="left:1241px;top:1020px;width:1px;height:38px;background:#4c4c4c;"></div><div style="left:1241px;top:1028px;width:9px;height:1px;background:#4c4c4c;"></div><div style="left:1255px;top:1036px;width:1px;height:22px;background:#4c4c4c;"></div><div style="left:1255px;top:1044px;width:9px;height:1px;background:#4c4c4c;"></div><div style="left:1414px;top:765px;width:12px;height:293px;background:#2d2d2d;"></div><svg style="left:1416px;top:770px;" width="8" height="5" viewBox="0 0 8 5"><path d="M0 5H8L4 0Z" fill="#c4c4c4"/></svg><svg style="left:1416px;top:1046px;" width="8" height="5" viewBox="0 0 8 5"><path d="M0 0H8L4 5Z" fill="#c4c4c4"/></svg><div style="left:1415.5px;top:781px;width:9px;height:188px;background:#5a5a5a;border-radius:4.5px;"></div><div style="left:1426px;top:765px;width:1px;height:293px;background:#232323;"></div><div style="left:1427px;top:765px;width:259px;height:21px;background:#353535;"></div><div style="left:1427px;top:786px;width:259px;height:1px;background:#2a2a2a;"></div><span class="t" style="left:1431.5px;top:766.5px;height:16px;line-height:16px;color:#c6c6c6;font-size:12.5px;letter-spacing:0.1px;">Assets</span><svg style="left:1475px;top:770px;" width="6" height="9" viewBox="0 0 6 9"><path d="M1 .8L5 4.5L1 8.2" fill="none" stroke="#8a8a8a" stroke-width="1.3"/></svg><span class="t" style="left:1486px;top:766.5px;height:16px;line-height:16px;color:#c6c6c6;font-size:12.5px;letter-spacing:0.08px;">_walkingParticleSystem</span><svg style="left:1627px;top:770px;" width="6" height="9" viewBox="0 0 6 9"><path d="M1 .8L5 4.5L1 8.2" fill="none" stroke="#8a8a8a" stroke-width="1.3"/></svg><div style="left:1636px;top:765px;width:50px;height:21px;overflow:hidden;"><span class="t" style="left:2px;top:1.5px;height:16px;line-height:16px;color:#e4e4e4;font-size:12.5px;font-weight:700;letter-spacing:0.2px;">_Material</span></div><div style="left:1427px;top:787px;width:259px;height:251px;background:#2b2b2b;"></div><div style="left:1446px;top:798px;width:60px;height:60px;background:#3c3f4c;"></div><div style="left:1438px;top:862px;width:76px;height:13px;background:#3c3c3c;border-radius:3px;"></div><div style="left:1442.5px;top:865.0px;width:3px;height:3px;background:#5fb8f0;border-radius:2px;"></div><span class="t" style="left:1448px;top:862.0px;height:13px;line-height:13px;color:#d6d6d6;font-size:10.5px;letter-spacing:0.08px;">systemPart...</span><div style="left:1526px;top:798px;width:60px;height:60px;background:#484848;"></div><div style="left:1522.5px;top:865.0px;width:3px;height:3px;background:#5fb8f0;border-radius:2px;"></div><span class="t" style="left:1528px;top:862.0px;height:13px;line-height:13px;color:#d6d6d6;font-size:10.5px;letter-spacing:0.08px;">systemPart...</span><div style="left:1606px;top:798px;width:60px;height:60px;background:#484848;"></div><div style="left:1602.5px;top:865.0px;width:3px;height:3px;background:#5fb8f0;border-radius:2px;"></div><span class="t" style="left:1608px;top:862.0px;height:13px;line-height:13px;color:#d6d6d6;font-size:10.5px;letter-spacing:0.08px;">systemPart...</span><div style="left:1446px;top:891px;width:60px;height:60px;background:#484848;"></div><div style="left:1442.5px;top:958.0px;width:3px;height:3px;background:#5fb8f0;border-radius:2px;"></div><span class="t" style="left:1448px;top:955.0px;height:13px;line-height:13px;color:#d6d6d6;font-size:10.5px;letter-spacing:0.08px;">systemPart...</span><div style="left:1526px;top:891px;width:60px;height:60px;background:#484848;"></div><div style="left:1522.5px;top:958.0px;width:3px;height:3px;background:#5fb8f0;border-radius:2px;"></div><span class="t" style="left:1528px;top:955.0px;height:13px;line-height:13px;color:#d6d6d6;font-size:10.5px;letter-spacing:0.08px;">systemPart...</span><div style="left:1606px;top:891px;width:60px;height:60px;background:#484848;"></div><div style="left:1602.5px;top:958.0px;width:3px;height:3px;background:#5fb8f0;border-radius:2px;"></div><span class="t" style="left:1608px;top:955.0px;height:13px;line-height:13px;color:#d6d6d6;font-size:10.5px;letter-spacing:0.08px;">systemPart...</span><svg style="left:1446px;top:798px;" width="60" height="60" viewBox="0 0 60 60"><ellipse cx="30" cy="14.655" rx="16.830000000000002" ry="5.032500000000001" fill="none" stroke="#dfe8ff" stroke-width="1.155"/><ellipse cx="30" cy="30" rx="20.130000000000003" ry="6.4350000000000005" fill="none" stroke="#dfe8ff" stroke-width="0.8"/><ellipse cx="30" cy="30" rx="16.665" ry="5.28" fill="none" stroke="#dfe8ff" stroke-width="0.8"/><ellipse cx="30" cy="45.18" rx="16.005" ry="5.3625" fill="#dfe8ff"/></svg><svg style="left:1526px;top:798px;" width="60" height="60" viewBox="0 0 60 60"><circle cx="30" cy="30" r="17" fill="#fff"/><circle cx="22" cy="20" r="9" fill="#fff"/><circle cx="33" cy="17" r="9" fill="#fff"/><circle cx="42" cy="24" r="8" fill="#fff"/><circle cx="44" cy="34" r="8" fill="#fff"/><circle cx="38" cy="42" r="8" fill="#fff"/><circle cx="27" cy="44" r="8" fill="#fff"/><circle cx="17" cy="38" r="8" fill="#fff"/><circle cx="15" cy="28" r="8" fill="#fff"/></svg><svg style="left:1606px;top:798px;" width="60" height="60" viewBox="0 0 60 60"><path d="M14 22V37M14 29.5L27 31.5M34 22.5H47V36.5H34" fill="none" stroke="#ee5350" stroke-width="5.5" stroke-linecap="round" stroke-linejoin="round"/></svg><svg style="left:1446px;top:891px;" width="60" height="60" viewBox="0 0 60 60"><path d="M17 12.3H43" stroke="#d8d8d8" stroke-width=".8"/><path d="M21 12.3H39" stroke="#f4f4f4" stroke-width="1.6" stroke-dasharray="2 1.2"/><ellipse cx="30" cy="11.5" rx="3.0" ry="1.8" fill="none" stroke="#f0f0f0" stroke-width=".9"/><path d="M13 21.5H47" stroke="#d8d8d8" stroke-width=".8"/><path d="M20 21.5H40" stroke="#f4f4f4" stroke-width="1.6" stroke-dasharray="2 1.2"/><ellipse cx="30" cy="20.7" rx="3.5999999999999996" ry="1.8" fill="none" stroke="#f0f0f0" stroke-width=".9"/><path d="M14 30.7H46" stroke="#d8d8d8" stroke-width=".8"/><path d="M18 30.7H42" stroke="#f4f4f4" stroke-width="1.6" stroke-dasharray="2 1.2"/><ellipse cx="30" cy="29.9" rx="4.8" ry="1.8" fill="none" stroke="#f0f0f0" stroke-width=".9"/><path d="M15 39.9H45" stroke="#d8d8d8" stroke-width=".8"/><path d="M20 39.9H40" stroke="#f4f4f4" stroke-width="1.6" stroke-dasharray="2 1.2"/><ellipse cx="30" cy="39.1" rx="3.5999999999999996" ry="1.8" fill="none" stroke="#f0f0f0" stroke-width=".9"/><path d="M15 49.099999999999994H45" stroke="#d8d8d8" stroke-width=".8"/><path d="M21 49.099999999999994H39" stroke="#f4f4f4" stroke-width="1.6" stroke-dasharray="2 1.2"/><ellipse cx="30" cy="48.3" rx="3.0" ry="1.8" fill="none" stroke="#f0f0f0" stroke-width=".9"/></svg><svg style="left:1526px;top:891px;" width="60" height="60" viewBox="0 0 60 60"><path d="M14 10.5H46" stroke="#b8b8b8" stroke-width="0.8"/><path d="M18 17.5H42" stroke="#a8a8a8" stroke-width="0.8"/><path d="M21 24.5H39" stroke="#ffffff" stroke-width="1.6"/><path d="M19 30.5H41" stroke="#ffffff" stroke-width="2.4"/><path d="M17 37.5H43" stroke="#c0c0c0" stroke-width="0.9"/><path d="M17 43.5H43" stroke="#ffffff" stroke-width="2.2"/><path d="M14 50.5H46" stroke="#b0b0b0" stroke-width="0.8"/><ellipse cx="30" cy="10" rx="4" ry="1.6" fill="none" stroke="#c8c8c8" stroke-width=".8"/><ellipse cx="30" cy="50" rx="4" ry="1.6" fill="none" stroke="#c0c0c0" stroke-width=".8"/><ellipse cx="30" cy="37" rx="3.5" ry="1.8" fill="none" stroke="#c8c8c8" stroke-width=".8"/></svg><svg style="left:1606px;top:891px;" width="60" height="60" viewBox="0 0 60 60"><path d="M24 8.5H44" stroke="#1c1c1c" stroke-width="1"/><path d="M16 10.5H44" stroke="#1c1c1c" stroke-width="1.2"/><path d="M24 13H44" stroke="#1c1c1c" stroke-width="0.9"/><path d="M16 15.5H43" stroke="#1c1c1c" stroke-width="1"/><path d="M23 18H44" stroke="#1c1c1c" stroke-width="1"/><path d="M17 20H43" stroke="#1c1c1c" stroke-width="0.8"/><path d="M24 23H43" stroke="#1c1c1c" stroke-width="1"/><path d="M23 26.5H44" stroke="#1c1c1c" stroke-width="1.6"/><path d="M17 29.5H36" stroke="#1c1c1c" stroke-width="0.9"/><path d="M16 33H42" stroke="#1c1c1c" stroke-width="1.4"/><path d="M24 37H35" stroke="#1c1c1c" stroke-width="0.9"/><path d="M22 42.5H34" stroke="#1c1c1c" stroke-width="1.1"/><path d="M27 46.5H34" stroke="#1c1c1c" stroke-width="0.9"/><path d="M26 50.5H33" stroke="#1c1c1c" stroke-width="0.6"/></svg><div style="left:1427px;top:1038px;width:259px;height:20px;background:#353535;"></div><svg style="left:1431px;top:1041px;" width="14" height="14" viewBox="0 0 14 14"><circle cx="7" cy="7" r="6.1" fill="none" stroke="#7fd0fb" stroke-width="1.3"/><circle cx="6" cy="5.8" r="3.7" fill="#7fd0fb"/></svg><div style="left:1447px;top:1039px;width:166px;height:18px;overflow:hidden;"><span class="t" style="left:0px;top:0.5px;height:16px;line-height:16px;color:#d6d6d6;font-size:12.5px;letter-spacing:0.1px;">Assets/_walkingParticleSystem</span></div><div style="left:1615px;top:1047px;width:55px;height:1px;background:#5e5e5e;"></div><div style="left:1642px;top:1043.2px;width:9.6px;height:9.6px;background:#a8a8a8;border-radius:5px;"></div><div style="left:1688px;top:725px;width:232px;height:333px;background:#313131;"></div><div style="left:1688px;top:725px;width:232px;height:19px;background:#242424;"></div><div style="left:1688px;top:725px;width:105px;height:20px;background:#353535;border-radius:3px 3px 0 0;"></div><span class="t" style="left:1695px;top:727.5px;height:16px;line-height:16px;color:#d6d6d6;font-size:12.5px;letter-spacing:0.02px;">MA Information</span><svg style="left:1904.0px;top:728.5px;" width="3" height="12" viewBox="0 0 3 12"><circle cx="1.5" cy="1.5" r="1.3" fill="#c4c4c4"/><circle cx="1.5" cy="6" r="1.3" fill="#c4c4c4"/><circle cx="1.5" cy="10.5" r="1.3" fill="#c4c4c4"/></svg><svg style="left:0px;top:0px;" width="1920" height="1080" viewBox="0 0 1920 1080"><path d="M1715 785L1718.7 757L1734.5 776Z M1755.3 785.5L1750.2 757L1734.5 776Z" fill="none" stroke="#3a97e0" stroke-width="2" stroke-linejoin="round"/><path d="M1721.5 766L1720 776L1722.5 775L1721 781M1747.5 766L1749 776L1746.5 775L1748 781" fill="none" stroke="#3a97e0" stroke-width="1.3"/><path d="M1863 769.5L1876 776L1889 769.5V781L1876 788L1863 781Z M1876 776V788" fill="none" stroke="#3a97e0" stroke-width="2" stroke-linejoin="round"/><path d="M1863 769.5L1856.5 762L1866 754.5L1872 760.5 M1889 769.5L1893.5 758.5L1884 751L1878.5 763 M1872 760.5L1878.5 763" fill="none" stroke="#3a97e0" stroke-width="1.8" stroke-linejoin="round"/><path d="M1867 752L1869.5 745L1873 751M1879 752L1882.5 747L1885 753" fill="none" stroke="#3a97e0" stroke-width="1.5"/></svg><span class="t" style="left:1758.5px;top:750.0px;height:24px;line-height:24px;color:#ffffff;font-size:21px;font-family:'DejaVu Sans','Liberation Sans',sans-serif;transform-origin:0 50%;-webkit-text-stroke:0.6px #fff;transform:scaleX(1.405);">odular</span><span class="t" style="left:1758.5px;top:766.7px;height:24px;line-height:24px;color:#ffffff;font-size:21px;font-family:'DejaVu Sans','Liberation Sans',sans-serif;transform-origin:0 50%;-webkit-text-stroke:0.6px #fff;transform:scaleX(1.38);">Avatar</span><div style="left:1688px;top:793px;width:232px;height:1.3px;background:#161616;"></div><svg style="left:1696px;top:802.5px;" width="10" height="8" viewBox="0 0 10 8"><path d="M0 0H10L5 8Z" fill="#636363"/></svg><span class="t" style="left:1711px;top:799.5px;height:16px;line-height:16px;color:#d6d6d6;font-size:12.5px;letter-spacing:0.35px;">Expressions Parameter Usage</span><span class="t" style="left:1756px;top:837.5px;height:24px;line-height:24px;color:#d6d6d6;font-size:19px;letter-spacing:0.85px;">[ NO DATA ]</span><div style="left:1688px;top:883.8px;width:232px;height:1.3px;background:#161616;"></div><span class="t" style="left:1707px;top:902.5px;height:16px;line-height:16px;color:#c6c6c6;font-size:12.5px;letter-spacing:0.2px;">Editor Language</span><div style="left:1858.7px;top:901.7px;width:42.5px;height:17px;background:#474747;border:1px solid #282828;border-radius:3px;"></div><span class="t" style="left:1862px;top:901.5px;height:16px;line-height:16px;color:#e4e4e4;font-size:12.5px;letter-spacing:0.07px;">Engl</span><svg style="left:1888.75px;top:907.5px;" width="8.5" height="5" viewBox="0 0 8.5 5"><path d="M0 0H8.5L4.25 5Z" fill="#c4c4c4"/></svg><div style="left:1814px;top:1059px;width:1px;height:21px;background:#101010;"></div><div style="left:1841px;top:1059px;width:1px;height:21px;background:#101010;"></div><div style="left:1867px;top:1059px;width:1px;height:21px;background:#101010;"></div><div style="left:1893px;top:1059px;width:1px;height:21px;background:#101010;"></div><svg style="left:1820px;top:1063px;" width="15" height="15" viewBox="0 0 15 15"><ellipse cx="7.5" cy="8.5" rx="3.4" ry="4.6" fill="#c4c4c4"/><path d="M1 5L4 7M14 5L11 7M.5 10H4M14.5 10H11M2 14.5L4.5 12M13 14.5L10.5 12M5 2L6.5 4M10 2L8.5 4" stroke="#c4c4c4" stroke-width="1.1"/><path d="M1 14.5L14 1" stroke="#c4c4c4" stroke-width="1.3"/></svg><svg style="left:1846px;top:1063px;" width="15" height="15" viewBox="0 0 15 15"><ellipse cx="7.5" cy="3.8" rx="5.5" ry="2.3" fill="#c4c4c4"/><path d="M2 6.5Q7.5 10 13 6.5V9Q7.5 12.5 2 9Z M2 10.5Q7.5 14 13 10.5V12Q7.5 15.5 2 12Z" fill="#c4c4c4"/><path d="M1 14.5L14 1" stroke="#c4c4c4" stroke-width="1.3"/></svg><svg style="left:1873px;top:1063px;" width="15" height="15" viewBox="0 0 15 15"><circle cx="7.5" cy="7.5" r="5.6" fill="none" stroke="#c4c4c4" stroke-width="1.2"/><ellipse cx="7.5" cy="7.5" rx="2.4" ry="5.6" fill="none" stroke="#c4c4c4" stroke-width="1"/><path d="M2 7.5H13" stroke="#c4c4c4" stroke-width="1"/><path d="M1 14.5L14 1" stroke="#c4c4c4" stroke-width="1.3"/></svg><svg style="left:1899px;top:1063px;" width="15" height="15" viewBox="0 0 15 15"><circle cx="7.5" cy="7.5" r="6.2" fill="none" stroke="#c4c4c4" stroke-width="1.3"/><path d="M4.5 7.5L6.8 9.8L10.8 5.4" fill="none" stroke="#c4c4c4" stroke-width="1.4"/></svg><!-- p_overlay --><div style="left:541.5px;top:123px;width:82.5px;height:83px;border:2.5px solid #e5502d;border-radius:5px;"></div><div style="left:650.5px;top:620.5px;width:251px;height:36px;border:2.5px solid #e5502d;border-radius:5px;"></div><svg style="left:0px;top:0px;pointer-events:none;" width="1920" height="1080" viewBox="0 0 1920 1080"><path d="M651.5 621L587.3 209.5" stroke="#e5502d" stroke-width="3.2" fill="none"/><path d="M581.6 217.3L587 208.6L595.3 214.8" fill="none" stroke="#e5502d" stroke-width="3.8" stroke-linejoin="miter" stroke-linecap="butt"/><path d="M587 208L583.5 215.5L592.5 214Z" fill="#e5502d"/></svg></div></body></html>
